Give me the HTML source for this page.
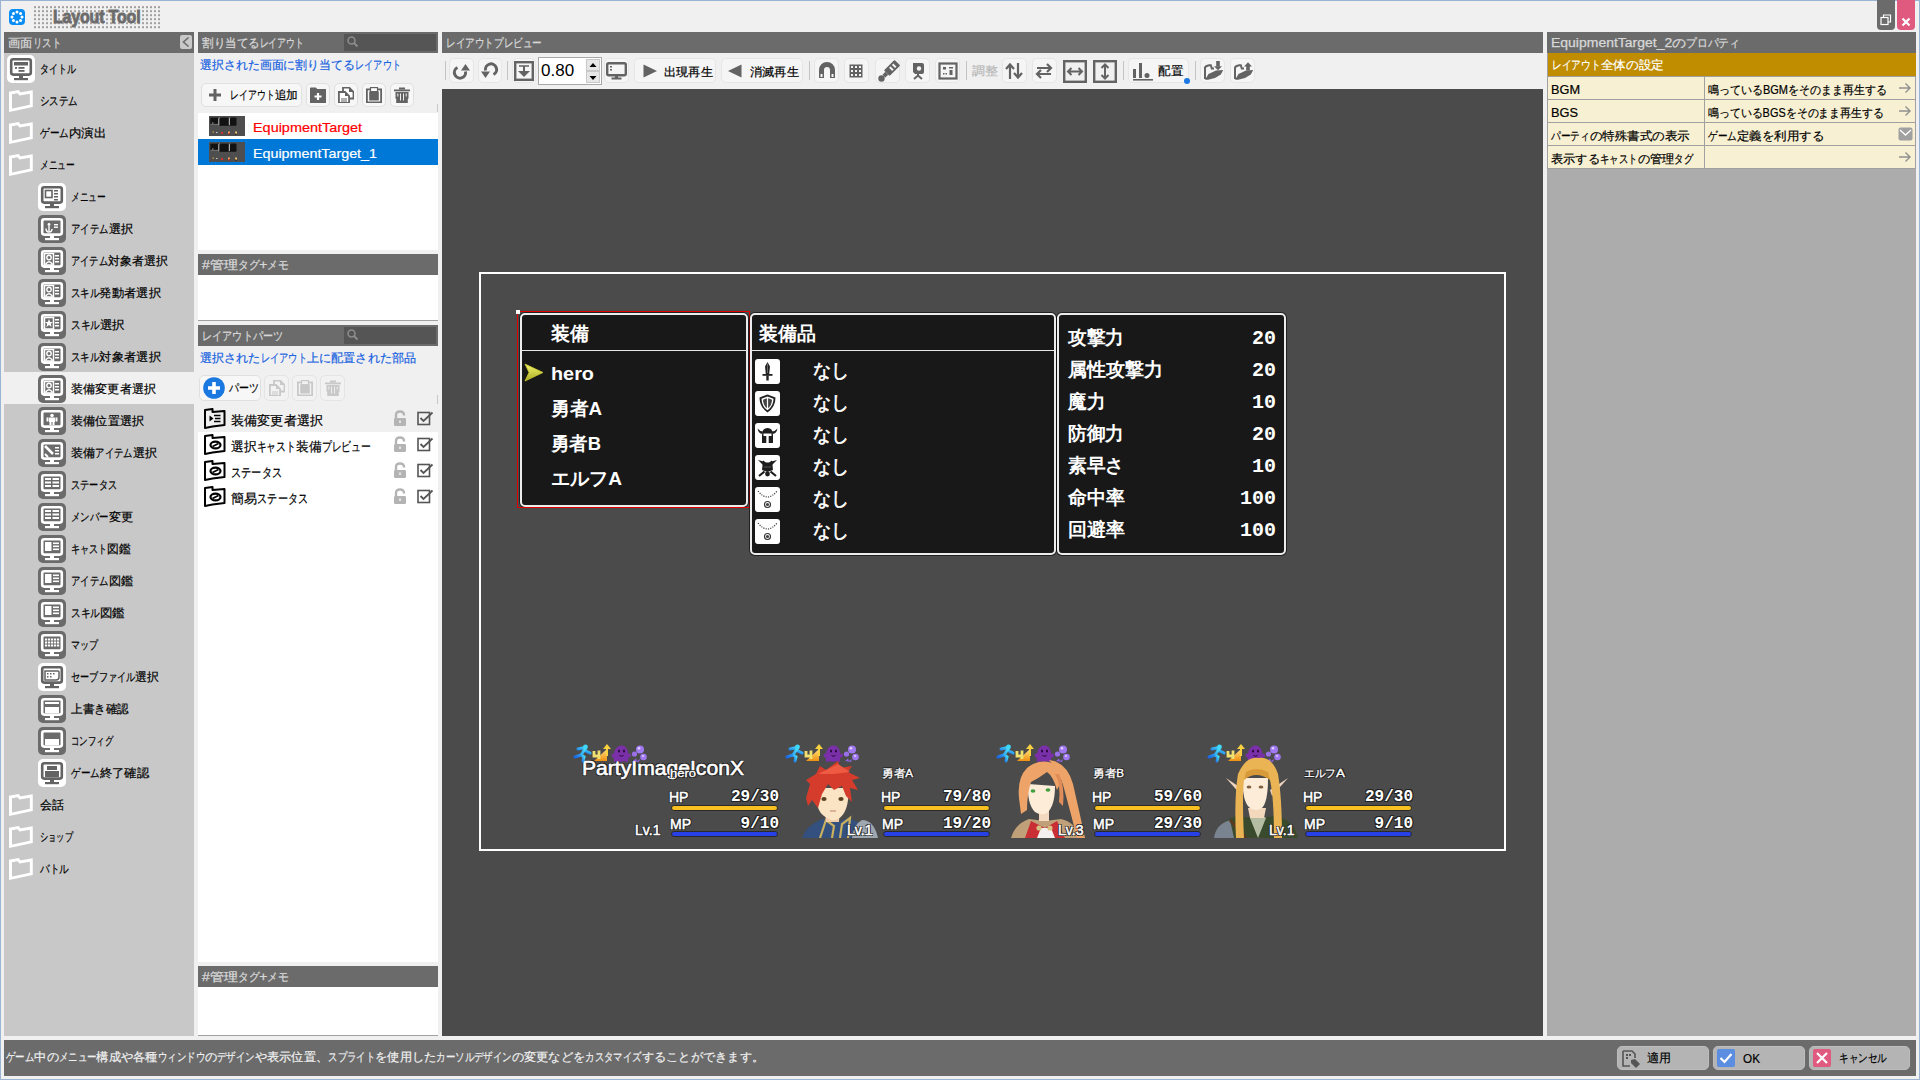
<!DOCTYPE html>
<html><head><meta charset="utf-8">
<style>
*{box-sizing:border-box;margin:0;padding:0}
html,body{width:1920px;height:1080px;overflow:hidden}
body{background:#f0f0f0;font-family:"Liberation Sans",sans-serif;font-size:12px;color:#000;position:relative}
.a{position:absolute;display:block}
.t{position:absolute;white-space:nowrap}
</style></head><body>
<div class="a" style="left:0px;top:0px;width:1920px;height:1080px;background:transparent;border:1px solid #98b4d4"></div>
<svg class="a" style="left:9px;top:9px;" width="16" height="16" viewBox="0 0 16 16"><rect x="0" y="0" width="16" height="16" rx="4" fill="#0a8cf5"/><circle cx="13.00" cy="8.00" r="1.5" fill="#fff"/><circle cx="11.54" cy="11.54" r="1.5" fill="#fff"/><circle cx="8.00" cy="13.00" r="1.5" fill="#fff"/><circle cx="4.46" cy="11.54" r="1.5" fill="#fff"/><circle cx="3.00" cy="8.00" r="1.5" fill="#fff"/><circle cx="4.46" cy="4.46" r="1.5" fill="#fff"/><circle cx="8.00" cy="3.00" r="1.5" fill="#fff"/><circle cx="11.54" cy="4.46" r="1.5" fill="#fff"/></svg>
<svg class="a" style="left:34px;top:6px;" width="128" height="24" viewBox="0 0 128 24"><defs><pattern id="dp" width="4" height="4" patternUnits="userSpaceOnUse"><rect x="0" y="0.2" width="2" height="2" fill="#a0a0a0"/></pattern></defs><rect width="128" height="24" fill="url(#dp)"/></svg>
<div class="t" style="left:53px;top:7.0px;font-size:19px;line-height:20px;color:#6b6b6b;font-weight:bold;transform:scaleX(0.84);transform-origin:left center;letter-spacing:-0.2px;-webkit-text-stroke:0.9px #6b6b6b;text-shadow:0 0 1px #f0f0f0,0 0 2px #f0f0f0">Layout Tool</div>
<div class="a" style="left:1877px;top:0px;width:18px;height:30px;background:#6b6b6b;border-radius:0 0 4px 4px"></div>
<svg class="a" style="left:1879px;top:13px;" width="14" height="14" viewBox="0 0 14 14"><rect x="2" y="4.5" width="7" height="7" fill="none" stroke="#fff" stroke-width="1.2"/><path d="M4.5 4.5V2H11.5V9H9" fill="none" stroke="#fff" stroke-width="1.2"/></svg>
<div class="a" style="left:1897px;top:0px;width:18px;height:30px;background:#e05a80;border-radius:0 0 4px 4px"></div>
<svg class="a" style="left:1899px;top:17px;" width="14" height="10" viewBox="0 0 14 10"><path d="M3.5 1.5L10.5 8.5M10.5 1.5L3.5 8.5" stroke="#fff" stroke-width="2.2"/></svg>
<div class="a" style="left:4px;top:32px;width:190px;height:21px;background:#6b6b6b;"></div>
<div class="t" style="left:8px;top:34.5px;font-size:12px;line-height:16px;color:#d8d8d8;font-weight:normal;transform:scaleX(1.0245);transform-origin:0 50%;-webkit-text-stroke:0.25px #d8d8d8">画面<span style="display:inline-block;transform:scaleX(0.77);transform-origin:0 0;margin-right:-8.28px">リスト</span></div>
<div class="a" style="left:180px;top:35px;width:12px;height:14px;background:#c8c8c8;border-radius:2px"></div>
<svg class="a" style="left:180px;top:35px;" width="12" height="14" viewBox="0 0 12 14"><path d="M8.5 2.5L3.5 7L8.5 11.5" fill="none" stroke="#6b6b6b" stroke-width="1.6"/></svg>
<div class="a" style="left:198px;top:32px;width:240px;height:21px;background:#6b6b6b;"></div>
<div class="t" style="left:202px;top:34.5px;font-size:12px;line-height:16px;color:#d8d8d8;font-weight:normal;transform:scaleX(0.9604);transform-origin:0 50%;-webkit-text-stroke:0.25px #d8d8d8">割り当てる<span style="display:inline-block;transform:scaleX(0.77);transform-origin:0 0;margin-right:-13.80px">レイアウト</span></div>
<div class="a" style="left:344px;top:34px;width:92px;height:17px;background:#555;"></div>
<svg class="a" style="left:346px;top:35px;" width="14" height="14" viewBox="0 0 14 14"><circle cx="5.5" cy="5.5" r="3.5" fill="none" stroke="#8c8c8c" stroke-width="1.6"/><path d="M8 8L11.5 11.5" stroke="#8c8c8c" stroke-width="2"/></svg>
<div class="a" style="left:442px;top:32px;width:1101px;height:21px;background:#6b6b6b;"></div>
<div class="t" style="left:446px;top:34.5px;font-size:12px;line-height:16px;color:#d8d8d8;font-weight:normal;transform:scaleX(1.0389);transform-origin:0 50%;-webkit-text-stroke:0.25px #d8d8d8"><span style="display:inline-block;transform:scaleX(0.77);transform-origin:0 0;margin-right:-27.60px">レイアウトプレビュー</span></div>
<div class="a" style="left:1547px;top:32px;width:369px;height:21px;background:#6b6b6b;"></div>
<div class="t" style="left:1551px;top:34.5px;font-size:12px;line-height:16px;color:#d8d8d8;font-weight:normal;transform:scaleX(1.1646);transform-origin:0 50%;-webkit-text-stroke:0.25px #d8d8d8">EquipmentTarget_2の<span style="display:inline-block;transform:scaleX(0.77);transform-origin:0 0;margin-right:-13.80px">プロパティ</span></div>
<div class="a" style="left:4px;top:53px;width:190px;height:983px;background:#c8c8c8;"></div>
<div class="a" style="left:4px;top:372px;width:190px;height:32px;background:#f0f0f0;"></div>
<svg class="a" style="left:7px;top:55px;" width="28" height="28" viewBox="0 0 28 28"><rect x="0" y="0" width="28" height="28" rx="5" fill="#fff"/><rect x="4.2" y="4.2" width="19.6" height="15.4" rx="2" fill="#fff" stroke="#636363" stroke-width="2.6"/><rect x="12" y="20" width="4" height="3" fill="#636363"/><rect x="7" y="23" width="14" height="2.2" fill="#636363"/><rect x="7" y="7" width="14" height="3.5" fill="#636363"/><rect x="8" y="12" width="2" height="1.8" fill="#636363"/><rect x="11.5" y="12" width="6" height="1.8" fill="#636363"/><rect x="11.5" y="15" width="6" height="1.8" fill="#636363"/></svg>
<div class="t" style="left:40px;top:60.5px;font-size:12px;line-height:16px;color:#000;font-weight:normal;transform:scaleX(0.9738);transform-origin:0 50%;-webkit-text-stroke:0.2px #000;"><span style="display:inline-block;transform:scaleX(0.77);transform-origin:0 0;margin-right:-11.04px">タイトル</span></div>
<svg class="a" style="left:8px;top:89px;" width="26" height="24" viewBox="0 0 26 24"><path d="M2.5 4L10.2 2.6L12 5L23.3 3L23.3 16.8L2.5 21.3Z" fill="none" stroke="#fff" stroke-width="2.9"/></svg>
<div class="t" style="left:40px;top:92.5px;font-size:12px;line-height:16px;color:#000;font-weight:normal;transform:scaleX(1.0279);transform-origin:0 50%;-webkit-text-stroke:0.2px #000;"><span style="display:inline-block;transform:scaleX(0.77);transform-origin:0 0;margin-right:-11.04px">システム</span></div>
<svg class="a" style="left:8px;top:121px;" width="26" height="24" viewBox="0 0 26 24"><path d="M2.5 4L10.2 2.6L12 5L23.3 3L23.3 16.8L2.5 21.3Z" fill="none" stroke="#fff" stroke-width="2.9"/></svg>
<div class="t" style="left:40px;top:124.5px;font-size:12px;line-height:16px;color:#000;font-weight:normal;transform:scaleX(1.0355);transform-origin:0 50%;-webkit-text-stroke:0.2px #000;"><span style="display:inline-block;transform:scaleX(0.77);transform-origin:0 0;margin-right:-8.28px">ゲーム</span>内演出</div>
<svg class="a" style="left:8px;top:153px;" width="26" height="24" viewBox="0 0 26 24"><path d="M2.5 4L10.2 2.6L12 5L23.3 3L23.3 16.8L2.5 21.3Z" fill="none" stroke="#fff" stroke-width="2.9"/></svg>
<div class="t" style="left:40px;top:156.5px;font-size:12px;line-height:16px;color:#000;font-weight:normal;transform:scaleX(0.9467);transform-origin:0 50%;-webkit-text-stroke:0.2px #000;"><span style="display:inline-block;transform:scaleX(0.77);transform-origin:0 0;margin-right:-11.04px">メニュー</span></div>
<svg class="a" style="left:38px;top:183px;" width="28" height="28" viewBox="0 0 28 28"><rect x="0" y="0" width="28" height="28" rx="5" fill="#fff"/><rect x="4.2" y="4.2" width="19.6" height="15.4" rx="2" fill="#fff" stroke="#636363" stroke-width="2.6"/><rect x="12" y="20" width="4" height="3" fill="#636363"/><rect x="7" y="23" width="14" height="2.2" fill="#636363"/><rect x="7.5" y="7.5" width="6.5" height="7" fill="none" stroke="#636363" stroke-width="1.6"/><rect x="16" y="7" width="4" height="1.5" fill="#636363"/><rect x="16" y="10" width="4" height="1.5" fill="#636363"/><rect x="16" y="13" width="4" height="1.5" fill="#636363"/><rect x="16" y="16" width="4" height="1.5" fill="#636363"/></svg>
<div class="t" style="left:71px;top:188.5px;font-size:12px;line-height:16px;color:#000;font-weight:normal;transform:scaleX(0.9467);transform-origin:0 50%;-webkit-text-stroke:0.2px #000;"><span style="display:inline-block;transform:scaleX(0.77);transform-origin:0 0;margin-right:-11.04px">メニュー</span></div>
<svg class="a" style="left:38px;top:215px;" width="28" height="28" viewBox="0 0 28 28"><rect x="0" y="0" width="28" height="28" rx="5" fill="#6b6b6b"/><rect x="4.2" y="4.2" width="19.6" height="15.4" rx="2" fill="#6b6b6b" stroke="#fff" stroke-width="2.6"/><rect x="12" y="20" width="4" height="3" fill="#fff"/><rect x="7" y="23" width="14" height="2.2" fill="#fff"/><rect x="7" y="7" width="14" height="11" fill="#6b6b6b"/><circle cx="11" cy="9.5" r="1.4" fill="#fff"/><path d="M11 11V16M8 13.5Q8 17 11 17Q14 17 14 14" fill="none" stroke="#fff" stroke-width="1.4"/><rect x="16" y="9" width="4" height="1.4" fill="#fff"/><rect x="16" y="11.5" width="4" height="1.4" fill="#fff"/></svg>
<div class="t" style="left:71px;top:220.5px;font-size:12px;line-height:16px;color:#000;font-weight:normal;transform:scaleX(1.0169);transform-origin:0 50%;-webkit-text-stroke:0.2px #000;"><span style="display:inline-block;transform:scaleX(0.77);transform-origin:0 0;margin-right:-11.04px">アイテム</span>選択</div>
<svg class="a" style="left:38px;top:247px;" width="28" height="28" viewBox="0 0 28 28"><rect x="0" y="0" width="28" height="28" rx="5" fill="#6b6b6b"/><rect x="4.2" y="4.2" width="19.6" height="15.4" rx="2" fill="#6b6b6b" stroke="#fff" stroke-width="2.6"/><rect x="12" y="20" width="4" height="3" fill="#fff"/><rect x="7" y="23" width="14" height="2.2" fill="#fff"/><rect x="6.5" y="6.5" width="9" height="11.5" fill="none" stroke="#fff" stroke-width="1.5"/><circle cx="11" cy="10.5" r="2.2" fill="none" stroke="#fff" stroke-width="1.4"/><path d="M7.5 17.5Q11 12 14.5 17.5" fill="none" stroke="#fff" stroke-width="1.4"/><rect x="17" y="8" width="4" height="1.5" fill="#fff"/><rect x="17" y="11" width="4" height="1.5" fill="#fff"/><rect x="17" y="14" width="4" height="1.5" fill="#fff"/></svg>
<div class="t" style="left:71px;top:252.5px;font-size:12px;line-height:16px;color:#000;font-weight:normal;transform:scaleX(1.0003);transform-origin:0 50%;-webkit-text-stroke:0.2px #000;"><span style="display:inline-block;transform:scaleX(0.77);transform-origin:0 0;margin-right:-11.04px">アイテム</span>対象者選択</div>
<svg class="a" style="left:38px;top:279px;" width="28" height="28" viewBox="0 0 28 28"><rect x="0" y="0" width="28" height="28" rx="5" fill="#6b6b6b"/><rect x="4.2" y="4.2" width="19.6" height="15.4" rx="2" fill="#6b6b6b" stroke="#fff" stroke-width="2.6"/><rect x="12" y="20" width="4" height="3" fill="#fff"/><rect x="7" y="23" width="14" height="2.2" fill="#fff"/><rect x="6.5" y="6.5" width="9" height="11.5" fill="none" stroke="#fff" stroke-width="1.5"/><circle cx="11" cy="10.5" r="2.2" fill="none" stroke="#fff" stroke-width="1.4"/><path d="M7.5 17.5Q11 12 14.5 17.5" fill="none" stroke="#fff" stroke-width="1.4"/><rect x="17" y="8" width="4" height="1.5" fill="#fff"/><rect x="17" y="11" width="4" height="1.5" fill="#fff"/><rect x="17" y="14" width="4" height="1.5" fill="#fff"/></svg>
<div class="t" style="left:71px;top:284.5px;font-size:12px;line-height:16px;color:#000;font-weight:normal;transform:scaleX(1.0258);transform-origin:0 50%;-webkit-text-stroke:0.2px #000;"><span style="display:inline-block;transform:scaleX(0.77);transform-origin:0 0;margin-right:-8.28px">スキル</span>発動者選択</div>
<svg class="a" style="left:38px;top:311px;" width="28" height="28" viewBox="0 0 28 28"><rect x="0" y="0" width="28" height="28" rx="5" fill="#6b6b6b"/><rect x="4.2" y="4.2" width="19.6" height="15.4" rx="2" fill="#6b6b6b" stroke="#fff" stroke-width="2.6"/><rect x="12" y="20" width="4" height="3" fill="#fff"/><rect x="7" y="23" width="14" height="2.2" fill="#fff"/><rect x="6.5" y="6.5" width="9" height="11.5" fill="none" stroke="#fff" stroke-width="1.5"/><path d="M11 8L12.2 11H15L12.8 12.8L13.6 16L11 14L8.4 16L9.2 12.8L7 11H9.8Z" fill="#fff"/><rect x="17" y="8" width="4" height="1.5" fill="#fff"/><rect x="17" y="11" width="4" height="1.5" fill="#fff"/><rect x="17" y="14" width="4" height="1.5" fill="#fff"/></svg>
<div class="t" style="left:71px;top:316.5px;font-size:12px;line-height:16px;color:#000;font-weight:normal;transform:scaleX(1.0438);transform-origin:0 50%;-webkit-text-stroke:0.2px #000;"><span style="display:inline-block;transform:scaleX(0.77);transform-origin:0 0;margin-right:-8.28px">スキル</span>選択</div>
<svg class="a" style="left:38px;top:343px;" width="28" height="28" viewBox="0 0 28 28"><rect x="0" y="0" width="28" height="28" rx="5" fill="#6b6b6b"/><rect x="4.2" y="4.2" width="19.6" height="15.4" rx="2" fill="#6b6b6b" stroke="#fff" stroke-width="2.6"/><rect x="12" y="20" width="4" height="3" fill="#fff"/><rect x="7" y="23" width="14" height="2.2" fill="#fff"/><rect x="6.5" y="6.5" width="9" height="11.5" fill="none" stroke="#fff" stroke-width="1.5"/><circle cx="11" cy="10.5" r="2.2" fill="none" stroke="#fff" stroke-width="1.4"/><path d="M7.5 17.5Q11 12 14.5 17.5" fill="none" stroke="#fff" stroke-width="1.4"/><rect x="17" y="8" width="4" height="1.5" fill="#fff"/><rect x="17" y="11" width="4" height="1.5" fill="#fff"/><rect x="17" y="14" width="4" height="1.5" fill="#fff"/></svg>
<div class="t" style="left:71px;top:348.5px;font-size:12px;line-height:16px;color:#000;font-weight:normal;transform:scaleX(1.0258);transform-origin:0 50%;-webkit-text-stroke:0.2px #000;"><span style="display:inline-block;transform:scaleX(0.77);transform-origin:0 0;margin-right:-8.28px">スキル</span>対象者選択</div>
<svg class="a" style="left:38px;top:375px;" width="28" height="28" viewBox="0 0 28 28"><rect x="0" y="0" width="28" height="28" rx="5" fill="#6b6b6b"/><rect x="4.2" y="4.2" width="19.6" height="15.4" rx="2" fill="#6b6b6b" stroke="#fff" stroke-width="2.6"/><rect x="12" y="20" width="4" height="3" fill="#fff"/><rect x="7" y="23" width="14" height="2.2" fill="#fff"/><rect x="6.5" y="6.5" width="9" height="11.5" fill="none" stroke="#fff" stroke-width="1.5"/><circle cx="11" cy="10.5" r="2.2" fill="none" stroke="#fff" stroke-width="1.4"/><path d="M7.5 17.5Q11 12 14.5 17.5" fill="none" stroke="#fff" stroke-width="1.4"/><rect x="17" y="8" width="4" height="1.5" fill="#fff"/><rect x="17" y="11" width="4" height="1.5" fill="#fff"/><rect x="17" y="14" width="4" height="1.5" fill="#fff"/></svg>
<div class="t" style="left:71px;top:380.5px;font-size:12px;line-height:16px;color:#000;font-weight:normal;transform:scaleX(1.0119);transform-origin:0 50%;-webkit-text-stroke:0.2px #000;">装備変更者選択</div>
<svg class="a" style="left:38px;top:407px;" width="28" height="28" viewBox="0 0 28 28"><rect x="0" y="0" width="28" height="28" rx="5" fill="#6b6b6b"/><rect x="4.2" y="4.2" width="19.6" height="15.4" rx="2" fill="#6b6b6b" stroke="#fff" stroke-width="2.6"/><rect x="12" y="20" width="4" height="3" fill="#fff"/><rect x="7" y="23" width="14" height="2.2" fill="#fff"/><circle cx="14" cy="8.5" r="1.8" fill="#fff"/><rect x="11" y="10.5" width="6" height="4.5" fill="#fff"/><rect x="8.5" y="10.5" width="2" height="4" fill="#fff"/><rect x="17.5" y="10.5" width="2" height="4" fill="#fff"/><rect x="11.5" y="15" width="2" height="3" fill="#fff"/><rect x="14.5" y="15" width="2" height="3" fill="#fff"/></svg>
<div class="t" style="left:71px;top:412.5px;font-size:12px;line-height:16px;color:#000;font-weight:normal;transform:scaleX(1.0139);transform-origin:0 50%;-webkit-text-stroke:0.2px #000;">装備位置選択</div>
<svg class="a" style="left:38px;top:439px;" width="28" height="28" viewBox="0 0 28 28"><rect x="0" y="0" width="28" height="28" rx="5" fill="#6b6b6b"/><rect x="4.2" y="4.2" width="19.6" height="15.4" rx="2" fill="#6b6b6b" stroke="#fff" stroke-width="2.6"/><rect x="12" y="20" width="4" height="3" fill="#fff"/><rect x="7" y="23" width="14" height="2.2" fill="#fff"/><path d="M7 7L15 15" stroke="#fff" stroke-width="2.5"/><path d="M7 15L10 18" stroke="#fff" stroke-width="2"/><rect x="17" y="8" width="4" height="1.5" fill="#fff"/><rect x="17" y="11" width="4" height="1.5" fill="#fff"/><rect x="17" y="14" width="4" height="1.5" fill="#fff"/></svg>
<div class="t" style="left:71px;top:444.5px;font-size:12px;line-height:16px;color:#000;font-weight:normal;transform:scaleX(1.0121);transform-origin:0 50%;-webkit-text-stroke:0.2px #000;">装備<span style="display:inline-block;transform:scaleX(0.77);transform-origin:0 0;margin-right:-11.04px">アイテム</span>選択</div>
<svg class="a" style="left:38px;top:471px;" width="28" height="28" viewBox="0 0 28 28"><rect x="0" y="0" width="28" height="28" rx="5" fill="#6b6b6b"/><rect x="4.2" y="4.2" width="19.6" height="15.4" rx="2" fill="#6b6b6b" stroke="#fff" stroke-width="2.6"/><rect x="12" y="20" width="4" height="3" fill="#fff"/><rect x="7" y="23" width="14" height="2.2" fill="#fff"/><rect x="7" y="7" width="6" height="2" fill="#fff"/><rect x="14.5" y="7" width="6.5" height="2" fill="#fff"/><rect x="7" y="10.5" width="6" height="2" fill="#fff"/><rect x="14.5" y="10.5" width="6.5" height="2" fill="#fff"/><rect x="7" y="14" width="6" height="2" fill="#fff"/><rect x="14.5" y="14" width="6.5" height="2" fill="#fff"/></svg>
<div class="t" style="left:71px;top:476.5px;font-size:12px;line-height:16px;color:#000;font-weight:normal;transform:scaleX(0.9956);transform-origin:0 50%;-webkit-text-stroke:0.2px #000;"><span style="display:inline-block;transform:scaleX(0.77);transform-origin:0 0;margin-right:-13.80px">ステータス</span></div>
<svg class="a" style="left:38px;top:503px;" width="28" height="28" viewBox="0 0 28 28"><rect x="0" y="0" width="28" height="28" rx="5" fill="#6b6b6b"/><rect x="4.2" y="4.2" width="19.6" height="15.4" rx="2" fill="#6b6b6b" stroke="#fff" stroke-width="2.6"/><rect x="12" y="20" width="4" height="3" fill="#fff"/><rect x="7" y="23" width="14" height="2.2" fill="#fff"/><rect x="7" y="7" width="6" height="2" fill="#fff"/><rect x="14.5" y="7" width="6.5" height="2" fill="#fff"/><rect x="7" y="10.5" width="6" height="2" fill="#fff"/><rect x="14.5" y="10.5" width="6.5" height="2" fill="#fff"/><rect x="7" y="14" width="6" height="2" fill="#fff"/><rect x="14.5" y="14" width="6.5" height="2" fill="#fff"/></svg>
<div class="t" style="left:71px;top:508.5px;font-size:12px;line-height:16px;color:#000;font-weight:normal;transform:scaleX(1.0169);transform-origin:0 50%;-webkit-text-stroke:0.2px #000;"><span style="display:inline-block;transform:scaleX(0.77);transform-origin:0 0;margin-right:-11.04px">メンバー</span>変更</div>
<svg class="a" style="left:38px;top:535px;" width="28" height="28" viewBox="0 0 28 28"><rect x="0" y="0" width="28" height="28" rx="5" fill="#6b6b6b"/><rect x="4.2" y="4.2" width="19.6" height="15.4" rx="2" fill="#6b6b6b" stroke="#fff" stroke-width="2.6"/><rect x="12" y="20" width="4" height="3" fill="#fff"/><rect x="7" y="23" width="14" height="2.2" fill="#fff"/><rect x="7" y="7" width="6.5" height="9" fill="#fff"/><rect x="15" y="7.5" width="6" height="1.6" fill="#fff"/><rect x="15" y="10.5" width="6" height="1.6" fill="#fff"/><rect x="15" y="13.5" width="6" height="1.6" fill="#fff"/></svg>
<div class="t" style="left:71px;top:540.5px;font-size:12px;line-height:16px;color:#000;font-weight:normal;transform:scaleX(0.9841);transform-origin:0 50%;-webkit-text-stroke:0.2px #000;"><span style="display:inline-block;transform:scaleX(0.77);transform-origin:0 0;margin-right:-11.04px">キャスト</span>図鑑</div>
<svg class="a" style="left:38px;top:567px;" width="28" height="28" viewBox="0 0 28 28"><rect x="0" y="0" width="28" height="28" rx="5" fill="#6b6b6b"/><rect x="4.2" y="4.2" width="19.6" height="15.4" rx="2" fill="#6b6b6b" stroke="#fff" stroke-width="2.6"/><rect x="12" y="20" width="4" height="3" fill="#fff"/><rect x="7" y="23" width="14" height="2.2" fill="#fff"/><rect x="7" y="7" width="6.5" height="9" fill="#fff"/><rect x="15" y="7.5" width="6" height="1.6" fill="#fff"/><rect x="15" y="10.5" width="6" height="1.6" fill="#fff"/><rect x="15" y="13.5" width="6" height="1.6" fill="#fff"/></svg>
<div class="t" style="left:71px;top:572.5px;font-size:12px;line-height:16px;color:#000;font-weight:normal;transform:scaleX(1.0169);transform-origin:0 50%;-webkit-text-stroke:0.2px #000;"><span style="display:inline-block;transform:scaleX(0.77);transform-origin:0 0;margin-right:-11.04px">アイテム</span>図鑑</div>
<svg class="a" style="left:38px;top:599px;" width="28" height="28" viewBox="0 0 28 28"><rect x="0" y="0" width="28" height="28" rx="5" fill="#6b6b6b"/><rect x="4.2" y="4.2" width="19.6" height="15.4" rx="2" fill="#6b6b6b" stroke="#fff" stroke-width="2.6"/><rect x="12" y="20" width="4" height="3" fill="#fff"/><rect x="7" y="23" width="14" height="2.2" fill="#fff"/><rect x="7" y="7" width="6.5" height="9" fill="#fff"/><rect x="15" y="7.5" width="6" height="1.6" fill="#fff"/><rect x="15" y="10.5" width="6" height="1.6" fill="#fff"/><rect x="15" y="13.5" width="6" height="1.6" fill="#fff"/></svg>
<div class="t" style="left:71px;top:604.5px;font-size:12px;line-height:16px;color:#000;font-weight:normal;transform:scaleX(1.0438);transform-origin:0 50%;-webkit-text-stroke:0.2px #000;"><span style="display:inline-block;transform:scaleX(0.77);transform-origin:0 0;margin-right:-8.28px">スキル</span>図鑑</div>
<svg class="a" style="left:38px;top:631px;" width="28" height="28" viewBox="0 0 28 28"><rect x="0" y="0" width="28" height="28" rx="5" fill="#6b6b6b"/><rect x="4.2" y="4.2" width="19.6" height="15.4" rx="2" fill="#6b6b6b" stroke="#fff" stroke-width="2.6"/><rect x="12" y="20" width="4" height="3" fill="#fff"/><rect x="7" y="23" width="14" height="2.2" fill="#fff"/><rect x="7" y="7.5" width="2.2" height="2" fill="#fff"/><rect x="7" y="10.5" width="2.2" height="2" fill="#fff"/><rect x="7" y="13.5" width="2.2" height="2" fill="#fff"/><rect x="10" y="7.5" width="2.2" height="2" fill="#fff"/><rect x="10" y="10.5" width="2.2" height="2" fill="#fff"/><rect x="10" y="13.5" width="2.2" height="2" fill="#fff"/><rect x="13" y="7.5" width="2.2" height="2" fill="#fff"/><rect x="13" y="10.5" width="2.2" height="2" fill="#fff"/><rect x="13" y="13.5" width="2.2" height="2" fill="#fff"/><rect x="16" y="7.5" width="2.2" height="2" fill="#fff"/><rect x="16" y="10.5" width="2.2" height="2" fill="#fff"/><rect x="16" y="13.5" width="2.2" height="2" fill="#fff"/><rect x="19" y="7.5" width="2.2" height="2" fill="#fff"/><rect x="19" y="10.5" width="2.2" height="2" fill="#fff"/><rect x="19" y="13.5" width="2.2" height="2" fill="#fff"/></svg>
<div class="t" style="left:71px;top:636.5px;font-size:12px;line-height:16px;color:#000;font-weight:normal;transform:scaleX(0.9735);transform-origin:0 50%;-webkit-text-stroke:0.2px #000;"><span style="display:inline-block;transform:scaleX(0.77);transform-origin:0 0;margin-right:-8.28px">マップ</span></div>
<svg class="a" style="left:38px;top:663px;" width="28" height="28" viewBox="0 0 28 28"><rect x="0" y="0" width="28" height="28" rx="5" fill="#fff"/><rect x="4.2" y="4.2" width="19.6" height="15.4" rx="2" fill="#fff" stroke="#636363" stroke-width="2.6"/><rect x="12" y="20" width="4" height="3" fill="#636363"/><rect x="7" y="23" width="14" height="2.2" fill="#636363"/><path d="M7 8H20Q21 8 21 9V14Q21 17 18 17H7Z" fill="none" stroke="#636363" stroke-width="1.5"/><rect x="9" y="10" width="1.5" height="1.5" fill="#636363"/><rect x="12" y="10" width="1.5" height="1.5" fill="#636363"/><rect x="15" y="10" width="1.5" height="1.5" fill="#636363"/><rect x="9" y="13" width="1.5" height="1.5" fill="#636363"/><rect x="12" y="13" width="1.5" height="1.5" fill="#636363"/></svg>
<div class="t" style="left:71px;top:668.5px;font-size:12px;line-height:16px;color:#000;font-weight:normal;transform:scaleX(0.9922);transform-origin:0 50%;-webkit-text-stroke:0.2px #000;"><span style="display:inline-block;transform:scaleX(0.77);transform-origin:0 0;margin-right:-19.32px">セーブファイル</span>選択</div>
<svg class="a" style="left:38px;top:695px;" width="28" height="28" viewBox="0 0 28 28"><rect x="0" y="0" width="28" height="28" rx="5" fill="#6b6b6b"/><rect x="4.2" y="4.2" width="19.6" height="15.4" rx="2" fill="#6b6b6b" stroke="#fff" stroke-width="2.6"/><rect x="12" y="20" width="4" height="3" fill="#fff"/><rect x="7" y="23" width="14" height="2.2" fill="#fff"/><rect x="7" y="7" width="14" height="2" fill="#fff"/><rect x="7" y="12" width="14" height="6" fill="#fff"/></svg>
<div class="t" style="left:71px;top:700.5px;font-size:12px;line-height:16px;color:#000;font-weight:normal;transform:scaleX(0.9667);transform-origin:0 50%;-webkit-text-stroke:0.2px #000;">上書き確認</div>
<svg class="a" style="left:38px;top:727px;" width="28" height="28" viewBox="0 0 28 28"><rect x="0" y="0" width="28" height="28" rx="5" fill="#6b6b6b"/><rect x="4.2" y="4.2" width="19.6" height="15.4" rx="2" fill="#6b6b6b" stroke="#fff" stroke-width="2.6"/><rect x="12" y="20" width="4" height="3" fill="#fff"/><rect x="7" y="23" width="14" height="2.2" fill="#fff"/><rect x="7" y="12" width="14" height="6" fill="#fff"/></svg>
<div class="t" style="left:71px;top:732.5px;font-size:12px;line-height:16px;color:#000;font-weight:normal;transform:scaleX(0.9090);transform-origin:0 50%;-webkit-text-stroke:0.2px #000;"><span style="display:inline-block;transform:scaleX(0.77);transform-origin:0 0;margin-right:-13.80px">コンフィグ</span></div>
<svg class="a" style="left:38px;top:759px;" width="28" height="28" viewBox="0 0 28 28"><rect x="0" y="0" width="28" height="28" rx="5" fill="#fff"/><rect x="4.2" y="4.2" width="19.6" height="15.4" rx="2" fill="#fff" stroke="#636363" stroke-width="2.6"/><rect x="12" y="20" width="4" height="3" fill="#636363"/><rect x="7" y="23" width="14" height="2.2" fill="#636363"/><rect x="9" y="7" width="10" height="4" fill="#636363"/><rect x="7" y="12" width="14" height="6" fill="#636363"/></svg>
<div class="t" style="left:71px;top:764.5px;font-size:12px;line-height:16px;color:#000;font-weight:normal;transform:scaleX(1.0299);transform-origin:0 50%;-webkit-text-stroke:0.2px #000;"><span style="display:inline-block;transform:scaleX(0.77);transform-origin:0 0;margin-right:-8.28px">ゲーム</span>終了確認</div>
<svg class="a" style="left:8px;top:793px;" width="26" height="24" viewBox="0 0 26 24"><path d="M2.5 4L10.2 2.6L12 5L23.3 3L23.3 16.8L2.5 21.3Z" fill="none" stroke="#fff" stroke-width="2.9"/></svg>
<div class="t" style="left:40px;top:796.5px;font-size:12px;line-height:16px;color:#000;font-weight:normal;transform:scaleX(1.0000);transform-origin:0 50%;-webkit-text-stroke:0.2px #000;">会話</div>
<svg class="a" style="left:8px;top:825px;" width="26" height="24" viewBox="0 0 26 24"><path d="M2.5 4L10.2 2.6L12 5L23.3 3L23.3 16.8L2.5 21.3Z" fill="none" stroke="#fff" stroke-width="2.9"/></svg>
<div class="t" style="left:40px;top:828.5px;font-size:12px;line-height:16px;color:#000;font-weight:normal;transform:scaleX(0.8926);transform-origin:0 50%;-webkit-text-stroke:0.2px #000;"><span style="display:inline-block;transform:scaleX(0.77);transform-origin:0 0;margin-right:-11.04px">ショップ</span></div>
<svg class="a" style="left:8px;top:857px;" width="26" height="24" viewBox="0 0 26 24"><path d="M2.5 4L10.2 2.6L12 5L23.3 3L23.3 16.8L2.5 21.3Z" fill="none" stroke="#fff" stroke-width="2.9"/></svg>
<div class="t" style="left:40px;top:860.5px;font-size:12px;line-height:16px;color:#000;font-weight:normal;transform:scaleX(1.0456);transform-origin:0 50%;-webkit-text-stroke:0.2px #000;"><span style="display:inline-block;transform:scaleX(0.77);transform-origin:0 0;margin-right:-8.28px">バトル</span></div>
<div class="t" style="left:200px;top:56.5px;font-size:12px;line-height:16px;color:#1862e0;font-weight:normal;transform:scaleX(0.9940);transform-origin:0 50%;-webkit-text-stroke:0.2px #1862e0;">選択された画面に割り当てる<span style="display:inline-block;transform:scaleX(0.77);transform-origin:0 0;margin-right:-13.80px">レイアウト</span></div>
<div class="a" style="left:201px;top:83px;width:101px;height:24px;background:#f7f7f7;border:1px solid #e0e0e0;border-radius:5px"></div>
<svg class="a" style="left:207px;top:87px;" width="16" height="16" viewBox="0 0 16 16"><path d="M8 2V14M2 8H14" stroke="#636363" stroke-width="3"/></svg>
<div class="t" style="left:230px;top:87.0px;font-size:12px;line-height:16px;color:#000;font-weight:normal;transform:scaleX(0.9686);transform-origin:0 50%;-webkit-text-stroke:0.2px #000;"><span style="display:inline-block;transform:scaleX(0.77);transform-origin:0 0;margin-right:-13.80px">レイアウト</span>追加</div>
<div class="a" style="left:306px;top:83px;width:24px;height:24px;background:#f7f7f7;border:1px solid #e0e0e0;border-radius:5px"></div>
<svg class="a" style="left:310px;top:87px;" width="16" height="16" viewBox="0 0 16 16"><path d="M0 1.2Q0 0.5 0.8 0.5H5.8L7.3 2H16V16H0Z" fill="#636363"/><path d="M8 6V13M4.5 9.5H11.5" stroke="#fff" stroke-width="2.2"/></svg>
<div class="a" style="left:334px;top:83px;width:24px;height:24px;background:#f7f7f7;border:1px solid #e0e0e0;border-radius:5px"></div>
<svg class="a" style="left:338px;top:87px;" width="16" height="16" viewBox="0 0 16 16"><path d="M5 0.5H11L15.5 5V11.5H5Z" fill="#fff" stroke="#636363" stroke-width="1.8"/><path d="M0.9 5H7L11.1 9.1V16H0.9Z" fill="#fff" stroke="#636363" stroke-width="1.8"/><path d="M3 12H9M3 14H9" stroke="#636363" stroke-width="1"/><path d="M11 0.5V5H15.5Z" fill="#636363"/><path d="M7 5V9.1H11.1Z" fill="#636363"/></svg>
<div class="a" style="left:362px;top:83px;width:24px;height:24px;background:#f7f7f7;border:1px solid #e0e0e0;border-radius:5px"></div>
<svg class="a" style="left:366px;top:87px;" width="16" height="16" viewBox="0 0 16 16"><rect x="0.9" y="2.4" width="14.2" height="13" fill="none" stroke="#636363" stroke-width="1.8"/><rect x="3.2" y="4.5" width="9.6" height="9" fill="#636363"/><rect x="4.5" y="0.6" width="7" height="4" fill="#fff" stroke="#636363" stroke-width="1.2"/></svg>
<div class="a" style="left:390px;top:83px;width:24px;height:24px;background:#f7f7f7;border:1px solid #e0e0e0;border-radius:5px"></div>
<svg class="a" style="left:394px;top:87px;" width="16" height="16" viewBox="0 0 16 16"><rect x="0" y="2.5" width="16" height="1.8" fill="#636363"/><rect x="5" y="0.5" width="6" height="2" fill="#636363"/><path d="M1.5 5H14.5V11.5L13.8 12V16H2.2V12L1.5 11.5Z" fill="#636363"/><path d="M3.8 6.5V9.5M6.5 6.5V13.5M9.5 6.5V13.5M12.2 6.5V9.5" stroke="#fff" stroke-width="0.9"/></svg>
<div class="a" style="left:437px;top:104px;width:1px;height:8px;background:#c8c8c8;"></div>
<div class="a" style="left:198px;top:113px;width:240px;height:137px;background:#fff;"></div>
<div class="a" style="left:198px;top:139px;width:240px;height:26px;background:#0078d7;"></div>
<svg class="a" style="left:209px;top:116px;" width="36" height="20" viewBox="0 0 36 20"><rect width="36" height="20" fill="#4e4e4e"/><rect x="1.3" y="1.6" width="7.8" height="6.6" fill="#121212"/><rect x="9.3" y="1.6" width="10.4" height="8.2" fill="#121212"/><rect x="20" y="1.6" width="7.5" height="8.2" rx="1" fill="#121212"/><path d="M9.8 9.5V2.5Q9.8 1.8 10.6 1.8M20.4 9V2.5Q20.4 1.8 21.2 1.8" stroke="#eee" stroke-width="0.8" fill="none"/><path d="M1.5 8.3H9" stroke="#aaa" stroke-width="0.5"/><rect x="3" y="6.5" width="1.5" height="1" fill="#aaa"/><rect x="3.5" y="15.5" width="1.5" height="1.2" fill="#c8a040"/><rect x="7" y="16" width="1.5" height="1" fill="#ccc"/><rect x="12" y="16" width="2" height="2" fill="#d03030"/><rect x="19" y="15.5" width="2" height="2.5" fill="#e0a060"/><rect x="19.5" y="17" width="1.5" height="1.5" fill="#c02020"/><rect x="26" y="15.5" width="2" height="2.5" fill="#e8c070"/><rect x="26" y="17.5" width="1.5" height="1" fill="#111"/></svg>
<div class="t" style="left:253px;top:118.5px;font-size:13px;line-height:17px;color:#f00;font-weight:normal;transform:scaleX(1.1091);transform-origin:0 50%;-webkit-text-stroke:0.2px #f00;">EquipmentTarget</div>
<svg class="a" style="left:209px;top:142px;" width="36" height="20" viewBox="0 0 36 20"><rect width="36" height="20" fill="#4e4e4e"/><rect x="1.3" y="1.6" width="7.8" height="6.6" fill="#121212"/><rect x="9.3" y="1.6" width="10.4" height="8.2" fill="#121212"/><rect x="20" y="1.6" width="7.5" height="8.2" rx="1" fill="#121212"/><path d="M9.8 9.5V2.5Q9.8 1.8 10.6 1.8M20.4 9V2.5Q20.4 1.8 21.2 1.8" stroke="#eee" stroke-width="0.8" fill="none"/><path d="M1.5 8.3H9" stroke="#aaa" stroke-width="0.5"/><rect x="3" y="6.5" width="1.5" height="1" fill="#aaa"/><rect x="3.5" y="15.5" width="1.5" height="1.2" fill="#c8a040"/><rect x="7" y="16" width="1.5" height="1" fill="#ccc"/><rect x="12" y="16" width="2" height="2" fill="#d03030"/><rect x="19" y="15.5" width="2" height="2.5" fill="#e0a060"/><rect x="19.5" y="17" width="1.5" height="1.5" fill="#c02020"/><rect x="26" y="15.5" width="2" height="2.5" fill="#e8c070"/><rect x="26" y="17.5" width="1.5" height="1" fill="#111"/></svg>
<div class="t" style="left:253px;top:144.5px;font-size:13px;line-height:17px;color:#fff;font-weight:normal;transform:scaleX(1.0998);transform-origin:0 50%;-webkit-text-stroke:0.2px #fff;">EquipmentTarget_1</div>
<div class="a" style="left:198px;top:254px;width:240px;height:21px;background:#6b6b6b;"></div>
<div class="t" style="left:202px;top:256.5px;font-size:12px;line-height:16px;color:#d8d8d8;font-weight:normal;transform:scaleX(1.1651);transform-origin:0 50%;-webkit-text-stroke:0.25px #d8d8d8">#管理<span style="display:inline-block;transform:scaleX(0.77);transform-origin:0 0;margin-right:-5.52px">タグ</span>+<span style="display:inline-block;transform:scaleX(0.77);transform-origin:0 0;margin-right:-5.52px">メモ</span></div>
<div class="a" style="left:198px;top:275px;width:240px;height:46px;background:#fff;border-bottom:1px solid #a0a0a0"></div>
<div class="a" style="left:198px;top:325px;width:240px;height:21px;background:#6b6b6b;"></div>
<div class="t" style="left:202px;top:327.5px;font-size:12px;line-height:16px;color:#d8d8d8;font-weight:normal;transform:scaleX(1.0958);transform-origin:0 50%;-webkit-text-stroke:0.25px #d8d8d8"><span style="display:inline-block;transform:scaleX(0.77);transform-origin:0 0;margin-right:-22.08px">レイアウトパーツ</span></div>
<div class="a" style="left:344px;top:327px;width:92px;height:17px;background:#555;"></div>
<svg class="a" style="left:346px;top:328px;" width="14" height="14" viewBox="0 0 14 14"><circle cx="5.5" cy="5.5" r="3.5" fill="none" stroke="#8c8c8c" stroke-width="1.6"/><path d="M8 8L11.5 11.5" stroke="#8c8c8c" stroke-width="2"/></svg>
<div class="t" style="left:200px;top:349.5px;font-size:12px;line-height:16px;color:#1862e0;font-weight:normal;transform:scaleX(1.0084);transform-origin:0 50%;-webkit-text-stroke:0.2px #1862e0;">選択された<span style="display:inline-block;transform:scaleX(0.77);transform-origin:0 0;margin-right:-13.80px">レイアウト</span>上に配置された部品</div>
<div class="a" style="left:199px;top:375px;width:62px;height:26px;background:#f7f7f7;border:1px solid #e0e0e0;border-radius:5px"></div>
<svg class="a" style="left:203px;top:377px;" width="22" height="22" viewBox="0 0 22 22"><circle cx="11" cy="11" r="10.8" fill="#1a78e0"/><path d="M11 5V17M5 11H17" stroke="#fff" stroke-width="3.6"/></svg>
<div class="t" style="left:229px;top:380.0px;font-size:12px;line-height:16px;color:#000;font-weight:normal;transform:scaleX(1.0817);transform-origin:0 50%;-webkit-text-stroke:0.2px #000;"><span style="display:inline-block;transform:scaleX(0.77);transform-origin:0 0;margin-right:-8.28px">パーツ</span></div>
<div class="a" style="left:264px;top:375px;width:25px;height:26px;background:#f2f2f2;border:1px solid #e4e4e4;border-radius:5px"></div>
<div class="a" style="left:292px;top:375px;width:25px;height:26px;background:#f2f2f2;border:1px solid #e4e4e4;border-radius:5px"></div>
<div class="a" style="left:320px;top:375px;width:25px;height:26px;background:#f2f2f2;border:1px solid #e4e4e4;border-radius:5px"></div>
<svg class="a" style="left:269px;top:380px;" width="16" height="16" viewBox="0 0 16 16"><path d="M5 0.5H11L15.5 5V11.5H5Z" fill="#f2f2f2" stroke="#c8c8c8" stroke-width="1.8"/><path d="M0.9 5H7L11.1 9.1V16H0.9Z" fill="#f2f2f2" stroke="#c8c8c8" stroke-width="1.8"/><path d="M3 12H9M3 14H9" stroke="#c8c8c8" stroke-width="1"/><path d="M11 0.5V5H15.5Z" fill="#c8c8c8"/><path d="M7 5V9.1H11.1Z" fill="#c8c8c8"/></svg>
<svg class="a" style="left:297px;top:380px;" width="16" height="16" viewBox="0 0 16 16"><rect x="0.9" y="2.4" width="14.2" height="13" fill="none" stroke="#c8c8c8" stroke-width="1.8"/><rect x="3.2" y="4.5" width="9.6" height="9" fill="#c8c8c8"/><rect x="4.5" y="0.6" width="7" height="4" fill="#f2f2f2" stroke="#c8c8c8" stroke-width="1.2"/></svg>
<svg class="a" style="left:325px;top:380px;" width="16" height="16" viewBox="0 0 16 16"><rect x="0" y="2.5" width="16" height="1.8" fill="#c8c8c8"/><rect x="5" y="0.5" width="6" height="2" fill="#c8c8c8"/><path d="M1.5 5H14.5V11.5L13.8 12V16H2.2V12L1.5 11.5Z" fill="#c8c8c8"/><path d="M3.8 6.5V9.5M6.5 6.5V13.5M9.5 6.5V13.5M12.2 6.5V9.5" stroke="#f2f2f2" stroke-width="0.9"/></svg>
<div class="a" style="left:437px;top:395px;width:1px;height:9px;background:#c8c8c8;"></div>
<div class="a" style="left:198px;top:432px;width:240px;height:530px;background:#fff;"></div>
<div class="a" style="left:198px;top:406px;width:240px;height:26px;background:#f0f0f0;"></div>
<svg class="a" style="left:204px;top:408px;" width="22" height="22" viewBox="0 0 22 22"><path d="M1 2L8.5 1V4L20.5 3V17L8.5 18.5L1 20Z" fill="none" stroke="#000" stroke-width="2" stroke-linejoin="round"/><path d="M5.5 7.5L9.5 10.5L5.5 13.5Z" fill="#000"/><path d="M10 7.5H16.5M11 10.5H16.5M10 13.5H16.5" stroke="#000" stroke-width="1.6"/></svg>
<div class="t" style="left:231px;top:411.5px;font-size:13px;line-height:17px;color:#000;font-weight:normal;transform:scaleX(1.0110);transform-origin:0 50%;-webkit-text-stroke:0.2px #000;">装備変更者選択</div>
<svg class="a" style="left:393px;top:410px;" width="14" height="17" viewBox="0 0 14 17"><path d="M3 8V5Q3 1.5 7 1.5Q11 1.5 11 5V5.5" fill="none" stroke="#b4b4b4" stroke-width="2.4"/><rect x="1" y="8" width="12" height="8" rx="1.2" fill="#b4b4b4"/><rect x="6.2" y="10.5" width="1.6" height="2.5" fill="#f0f0f0"/></svg>
<svg class="a" style="left:417px;top:411px;" width="17" height="15" viewBox="0 0 17 15"><rect x="1" y="1.5" width="11.5" height="12" fill="none" stroke="#555" stroke-width="1.6"/><path d="M3.5 7L6.5 10L15.5 1.5" fill="none" stroke="#555" stroke-width="1.8"/></svg>
<svg class="a" style="left:204px;top:434px;" width="22" height="22" viewBox="0 0 22 22"><path d="M1 2L8.5 1V4L20.5 3V17L8.5 18.5L1 20Z" fill="none" stroke="#000" stroke-width="2" stroke-linejoin="round"/><ellipse cx="11.5" cy="11" rx="5" ry="3.4" fill="none" stroke="#000" stroke-width="2.2"/><path d="M8.5 12.5L14.5 9.5" stroke="#000" stroke-width="1.8"/></svg>
<div class="t" style="left:231px;top:437.5px;font-size:13px;line-height:17px;color:#000;font-weight:normal;transform:scaleX(0.9852);transform-origin:0 50%;-webkit-text-stroke:0.2px #000;">選択<span style="display:inline-block;transform:scaleX(0.77);transform-origin:0 0;margin-right:-11.96px">キャスト</span>装備<span style="display:inline-block;transform:scaleX(0.77);transform-origin:0 0;margin-right:-14.95px">プレビュー</span></div>
<svg class="a" style="left:393px;top:436px;" width="14" height="17" viewBox="0 0 14 17"><path d="M3 8V5Q3 1.5 7 1.5Q11 1.5 11 5V5.5" fill="none" stroke="#b4b4b4" stroke-width="2.4"/><rect x="1" y="8" width="12" height="8" rx="1.2" fill="#b4b4b4"/><rect x="6.2" y="10.5" width="1.6" height="2.5" fill="#f0f0f0"/></svg>
<svg class="a" style="left:417px;top:437px;" width="17" height="15" viewBox="0 0 17 15"><rect x="1" y="1.5" width="11.5" height="12" fill="none" stroke="#555" stroke-width="1.6"/><path d="M3.5 7L6.5 10L15.5 1.5" fill="none" stroke="#555" stroke-width="1.8"/></svg>
<svg class="a" style="left:204px;top:460px;" width="22" height="22" viewBox="0 0 22 22"><path d="M1 2L8.5 1V4L20.5 3V17L8.5 18.5L1 20Z" fill="none" stroke="#000" stroke-width="2" stroke-linejoin="round"/><ellipse cx="11.5" cy="11" rx="5" ry="3.4" fill="none" stroke="#000" stroke-width="2.2"/><path d="M8.5 12.5L14.5 9.5" stroke="#000" stroke-width="1.8"/></svg>
<div class="t" style="left:231px;top:463.5px;font-size:13px;line-height:17px;color:#000;font-weight:normal;transform:scaleX(1.0187);transform-origin:0 50%;-webkit-text-stroke:0.2px #000;"><span style="display:inline-block;transform:scaleX(0.77);transform-origin:0 0;margin-right:-14.95px">ステータス</span></div>
<svg class="a" style="left:393px;top:462px;" width="14" height="17" viewBox="0 0 14 17"><path d="M3 8V5Q3 1.5 7 1.5Q11 1.5 11 5V5.5" fill="none" stroke="#b4b4b4" stroke-width="2.4"/><rect x="1" y="8" width="12" height="8" rx="1.2" fill="#b4b4b4"/><rect x="6.2" y="10.5" width="1.6" height="2.5" fill="#f0f0f0"/></svg>
<svg class="a" style="left:417px;top:463px;" width="17" height="15" viewBox="0 0 17 15"><rect x="1" y="1.5" width="11.5" height="12" fill="none" stroke="#555" stroke-width="1.6"/><path d="M3.5 7L6.5 10L15.5 1.5" fill="none" stroke="#555" stroke-width="1.8"/></svg>
<svg class="a" style="left:204px;top:486px;" width="22" height="22" viewBox="0 0 22 22"><path d="M1 2L8.5 1V4L20.5 3V17L8.5 18.5L1 20Z" fill="none" stroke="#000" stroke-width="2" stroke-linejoin="round"/><ellipse cx="11.5" cy="11" rx="5" ry="3.4" fill="none" stroke="#000" stroke-width="2.2"/><path d="M8.5 12.5L14.5 9.5" stroke="#000" stroke-width="1.8"/></svg>
<div class="t" style="left:231px;top:489.5px;font-size:13px;line-height:17px;color:#000;font-weight:normal;transform:scaleX(1.0123);transform-origin:0 50%;-webkit-text-stroke:0.2px #000;">簡易<span style="display:inline-block;transform:scaleX(0.77);transform-origin:0 0;margin-right:-14.95px">ステータス</span></div>
<svg class="a" style="left:393px;top:488px;" width="14" height="17" viewBox="0 0 14 17"><path d="M3 8V5Q3 1.5 7 1.5Q11 1.5 11 5V5.5" fill="none" stroke="#b4b4b4" stroke-width="2.4"/><rect x="1" y="8" width="12" height="8" rx="1.2" fill="#b4b4b4"/><rect x="6.2" y="10.5" width="1.6" height="2.5" fill="#f0f0f0"/></svg>
<svg class="a" style="left:417px;top:489px;" width="17" height="15" viewBox="0 0 17 15"><rect x="1" y="1.5" width="11.5" height="12" fill="none" stroke="#555" stroke-width="1.6"/><path d="M3.5 7L6.5 10L15.5 1.5" fill="none" stroke="#555" stroke-width="1.8"/></svg>
<div class="a" style="left:198px;top:966px;width:240px;height:21px;background:#6b6b6b;"></div>
<div class="t" style="left:202px;top:968.5px;font-size:12px;line-height:16px;color:#d8d8d8;font-weight:normal;transform:scaleX(1.1651);transform-origin:0 50%;-webkit-text-stroke:0.25px #d8d8d8">#管理<span style="display:inline-block;transform:scaleX(0.77);transform-origin:0 0;margin-right:-5.52px">タグ</span>+<span style="display:inline-block;transform:scaleX(0.77);transform-origin:0 0;margin-right:-5.52px">メモ</span></div>
<div class="a" style="left:198px;top:987px;width:240px;height:49px;background:#fff;border-bottom:1px solid #a0a0a0"></div>
<div class="a" style="left:445px;top:61px;width:1px;height:19px;background:#c4c4c4;"></div>
<div class="a" style="left:449px;top:58px;width:25px;height:25px;background:#f5f5f5;border:1px solid #e6e6e6;border-radius:5px"></div>
<svg class="a" style="left:451px;top:61px;" width="20" height="20" viewBox="0 0 20 20"><path d="M6.5 6.5A5.6 5.6 0 1 0 14.5 10.5" fill="none" stroke="#636363" stroke-width="3"/><path d="M14.5 3L19 9.5H10Z" fill="#636363"/></svg>
<div class="a" style="left:478px;top:58px;width:24px;height:25px;background:#f5f5f5;border:1px solid #e6e6e6;border-radius:5px"></div>
<svg class="a" style="left:480px;top:61px;transform:rotate(180deg)" width="20" height="20" viewBox="0 0 20 20"><path d="M6.5 6.5A5.6 5.6 0 1 0 14.5 10.5" fill="none" stroke="#636363" stroke-width="3"/><path d="M14.5 3L19 9.5H10Z" fill="#636363"/></svg>
<div class="a" style="left:507px;top:61px;width:1px;height:19px;background:#c4c4c4;"></div>
<div class="a" style="left:512px;top:58px;width:24px;height:25px;background:#f5f5f5;border:1px solid #e6e6e6;border-radius:5px"></div>
<svg class="a" style="left:514px;top:61px;" width="20" height="20" viewBox="0 0 20 20"><rect x="1.2" y="1.2" width="17.6" height="17.6" fill="none" stroke="#636363" stroke-width="2.4"/><path d="M5 5H15" stroke="#636363" stroke-width="1.5"/><rect x="9" y="5" width="2" height="5" fill="#636363"/><path d="M4 10H16L10 16Z" fill="#636363"/></svg>
<div class="a" style="left:538px;top:57px;width:64px;height:28px;background:#fff;border:1px solid #a8a8a8"></div>
<div class="t" style="left:541px;top:61.0px;font-size:17px;line-height:20px;color:#000;font-weight:normal;">0.80</div>
<div class="a" style="left:586px;top:59px;width:14px;height:12px;background:#e6e6e6;border:1px solid #c8c8c8"></div>
<div class="a" style="left:586px;top:71px;width:14px;height:12px;background:#e6e6e6;border:1px solid #c8c8c8"></div>
<svg class="a" style="left:589px;top:62px;" width="8" height="6" viewBox="0 0 8 6"><path d="M4 1L7.5 5H0.5Z" fill="#000"/></svg>
<svg class="a" style="left:589px;top:75px;" width="8" height="6" viewBox="0 0 8 6"><path d="M0.5 1H7.5L4 5Z" fill="#000"/></svg>
<div class="a" style="left:604px;top:58px;width:25px;height:25px;background:#f5f5f5;border:1px solid #e6e6e6;border-radius:5px"></div>
<svg class="a" style="left:606px;top:61px;" width="21" height="20" viewBox="0 0 21 20"><rect x="1.2" y="2.2" width="18.6" height="12" rx="1.5" fill="none" stroke="#636363" stroke-width="2.4"/><rect x="4" y="5" width="2" height="1.5" fill="#636363"/><rect x="4" y="8" width="2" height="1.5" fill="#636363"/><rect x="9" y="14" width="3" height="3" fill="#636363"/><rect x="5.5" y="16.5" width="10" height="2" fill="#636363"/></svg>
<div class="a" style="left:634px;top:58px;width:82px;height:25px;background:#f5f5f5;border:1px solid #e6e6e6;border-radius:5px"></div>
<svg class="a" style="left:642px;top:63px;" width="16" height="16" viewBox="0 0 16 16"><path d="M1.5 1.5L15 8L1.5 14.5Z" fill="#636363"/></svg>
<div class="t" style="left:664px;top:63.5px;font-size:12px;line-height:16px;color:#000;font-weight:normal;transform:scaleX(1.0208);transform-origin:0 50%;-webkit-text-stroke:0.2px #000;">出現再生</div>
<div class="a" style="left:721px;top:58px;width:82px;height:25px;background:#f5f5f5;border:1px solid #e6e6e6;border-radius:5px"></div>
<svg class="a" style="left:727px;top:63px;" width="16" height="16" viewBox="0 0 16 16"><path d="M14.5 1.5L1 8L14.5 14.5Z" fill="#636363"/></svg>
<div class="t" style="left:750px;top:63.5px;font-size:12px;line-height:16px;color:#000;font-weight:normal;transform:scaleX(1.0208);transform-origin:0 50%;-webkit-text-stroke:0.2px #000;">消滅再生</div>
<div class="a" style="left:809px;top:61px;width:1px;height:19px;background:#c4c4c4;"></div>
<div class="a" style="left:814px;top:58px;width:25px;height:25px;background:#f5f5f5;border:1px solid #e6e6e6;border-radius:5px"></div>
<svg class="a" style="left:818px;top:62px;" width="18" height="18" viewBox="0 0 18 18"><path d="M1 16V8A8 8 0 0 1 17 8V16H12V8A3 3 0 0 0 6 8V16Z" fill="#636363"/><rect x="2.5" y="12" width="2" height="3" fill="#f5f5f5"/><rect x="13.5" y="12" width="2" height="3" fill="#f5f5f5"/></svg>
<div class="a" style="left:844px;top:58px;width:25px;height:25px;background:#f5f5f5;border:1px solid #e6e6e6;border-radius:5px"></div>
<svg class="a" style="left:849px;top:64px;" width="14" height="14" viewBox="0 0 14 14"><rect x="0.5" y="0.5" width="13" height="13" fill="#636363"/><rect x="2" y="2" width="2" height="2" fill="#f5f5f5"/><rect x="2" y="6" width="2" height="2" fill="#f5f5f5"/><rect x="2" y="10" width="2" height="2" fill="#f5f5f5"/><rect x="6" y="2" width="2" height="2" fill="#f5f5f5"/><rect x="6" y="6" width="2" height="2" fill="#f5f5f5"/><rect x="6" y="10" width="2" height="2" fill="#f5f5f5"/><rect x="10" y="2" width="2" height="2" fill="#f5f5f5"/><rect x="10" y="6" width="2" height="2" fill="#f5f5f5"/><rect x="10" y="10" width="2" height="2" fill="#f5f5f5"/></svg>
<div class="a" style="left:875px;top:58px;width:25px;height:25px;background:#f5f5f5;border:1px solid #e6e6e6;border-radius:5px"></div>
<svg class="a" style="left:876px;top:59px;" width="24" height="24" viewBox="0 0 24 24"><g transform="rotate(45 15 10)"><rect x="11" y="1" width="8" height="15" rx="1" fill="#636363"/><rect x="12.8" y="4.5" width="4.4" height="2" fill="#f5f5f5"/><rect x="12.8" y="8.5" width="4.4" height="2" fill="#f5f5f5"/><rect x="13" y="16" width="4" height="4" fill="#636363"/></g><circle cx="5.5" cy="19.5" r="3.2" fill="#636363"/></svg>
<div class="a" style="left:905px;top:58px;width:25px;height:25px;background:#f5f5f5;border:1px solid #e6e6e6;border-radius:5px"></div>
<svg class="a" style="left:909px;top:62px;" width="18" height="18" viewBox="0 0 18 18"><path d="M4 1H13Q15 1 15 3V10Q15 12 13 12H6L4 10Z" fill="#636363"/><circle cx="10" cy="6.5" r="2.2" fill="#f5f5f5"/><path d="M5 17L9 13.5L13 17" fill="none" stroke="#636363" stroke-width="2"/><rect x="8" y="11" width="2" height="3" fill="#636363"/></svg>
<div class="a" style="left:935px;top:58px;width:25px;height:25px;background:#f5f5f5;border:1px solid #e6e6e6;border-radius:5px"></div>
<svg class="a" style="left:938px;top:61px;" width="20" height="20" viewBox="0 0 20 20"><rect x="1.5" y="2.5" width="17" height="15" fill="none" stroke="#636363" stroke-width="2.2"/><rect x="5" y="6" width="3" height="2.5" fill="#636363"/><rect x="11" y="6" width="4" height="1.5" fill="#636363"/><rect x="11.5" y="9" width="3" height="5" fill="#636363"/><rect x="5" y="12" width="1.5" height="1.5" fill="#636363"/><rect x="7.5" y="12" width="1.5" height="1.5" fill="#636363"/></svg>
<div class="a" style="left:966px;top:61px;width:1px;height:19px;background:#c4c4c4;"></div>
<div class="t" style="left:972px;top:63.0px;font-size:12px;line-height:16px;color:#b8b8b8;font-weight:normal;transform:scaleX(1.0833);transform-origin:0 50%;-webkit-text-stroke:0.2px #b8b8b8;">調整</div>
<div class="a" style="left:1002px;top:58px;width:25px;height:25px;background:#f5f5f5;border:1px solid #e6e6e6;border-radius:5px"></div>
<svg class="a" style="left:1004px;top:62px;" width="20" height="18" viewBox="0 0 20 18"><path d="M6 17V3M2 7L6 2.5L10 7M14 1V15M10 11L14 15.5L18 11" fill="none" stroke="#636363" stroke-width="2.2"/></svg>
<div class="a" style="left:1032px;top:58px;width:25px;height:25px;background:#f5f5f5;border:1px solid #e6e6e6;border-radius:5px"></div>
<svg class="a" style="left:1034px;top:62px;" width="20" height="18" viewBox="0 0 20 18"><path d="M3 6H17M13 2L17 6L13 10M17 12H3M7 8L3 12L7 16" fill="none" stroke="#636363" stroke-width="2.2"/></svg>
<svg class="a" style="left:1063px;top:60px;" width="24" height="23" viewBox="0 0 24 23"><rect x="1.2" y="1.2" width="21.6" height="20.6" fill="none" stroke="#636363" stroke-width="2.4"/><path d="M5 11.5H19M8.5 8L5 11.5L8.5 15M15.5 8L19 11.5L15.5 15" fill="none" stroke="#636363" stroke-width="2"/></svg>
<svg class="a" style="left:1093px;top:60px;" width="24" height="23" viewBox="0 0 24 23"><rect x="1.2" y="1.2" width="21.6" height="20.6" fill="none" stroke="#636363" stroke-width="2.4"/><path d="M12 4.5V18.5M8.5 8L12 4.5L15.5 8M8.5 15L12 18.5L15.5 15" fill="none" stroke="#636363" stroke-width="2"/></svg>
<div class="a" style="left:1123px;top:61px;width:1px;height:19px;background:#c4c4c4;"></div>
<div class="a" style="left:1128px;top:58px;width:61px;height:25px;background:#f5f5f5;border:1px solid #e6e6e6;border-radius:5px"></div>
<svg class="a" style="left:1132px;top:61px;" width="22" height="20" viewBox="0 0 22 20"><rect x="1" y="8" width="3" height="9" fill="#636363"/><rect x="7" y="2" width="3" height="15" fill="#636363"/><circle cx="15" cy="14.5" r="2.5" fill="#636363"/><rect x="1" y="18" width="20" height="1.6" fill="#636363"/></svg>
<div class="t" style="left:1158px;top:63.0px;font-size:12px;line-height:16px;color:#000;font-weight:normal;transform:scaleX(1.0417);transform-origin:0 50%;-webkit-text-stroke:0.2px #000;">配置</div>
<svg class="a" style="left:1183px;top:77px;" width="8" height="8" viewBox="0 0 8 8"><circle cx="4" cy="4" r="3" fill="#1a78e0"/></svg>
<div class="a" style="left:1195px;top:61px;width:1px;height:19px;background:#c4c4c4;"></div>
<div class="a" style="left:1200px;top:58px;width:25px;height:25px;background:#f5f5f5;border:1px solid #e6e6e6;border-radius:5px"></div>
<svg class="a" style="left:1200px;top:58px;" width="24" height="24" viewBox="0 0 24 24"><path d="M5 21V9.5L6.2 8.2L9 7.3H10.8L11.8 10.6H14" fill="none" stroke="#636363" stroke-width="2"/><path d="M5 21.8L8.5 16L16 12.5L23.2 12L20.8 16.5L15 20L8 21.8Z" fill="#636363"/><rect x="16.2" y="3" width="3.6" height="5.5" fill="#636363"/><path d="M14 8.3H22L18 12.3Z" fill="#636363"/></svg>
<div class="a" style="left:1230px;top:58px;width:25px;height:25px;background:#f5f5f5;border:1px solid #e6e6e6;border-radius:5px"></div>
<svg class="a" style="left:1230px;top:58px;" width="24" height="24" viewBox="0 0 24 24"><path d="M5 21V9.5L6.2 8.2L9 7.3H10.8L11.8 10.6H14" fill="none" stroke="#636363" stroke-width="2"/><path d="M5 21.8L8.5 16L16 12.5L23.2 12L20.8 16.5L15 20L8 21.8Z" fill="#636363"/><rect x="16.2" y="7.5" width="3.6" height="5" fill="#636363"/><path d="M14 8.5L18 4.3L22 8.5Z" fill="#636363"/></svg>
<div class="a" style="left:442px;top:89px;width:1101px;height:947px;background:#4b4b4b;"></div>
<div class="a" style="left:479px;top:272px;width:1027px;height:579px;background:transparent;border:2px solid #fff"></div>
<div class="a" style="left:1547px;top:53px;width:369px;height:983px;background:#acacac;"></div>
<div class="a" style="left:1547px;top:53px;width:369px;height:23px;background:#c08c00;border-left:1px solid #a0a0a0"></div>
<div class="t" style="left:1552px;top:56.5px;font-size:12px;line-height:16px;color:#fff;font-weight:normal;transform:scaleX(1.0546);transform-origin:0 50%;-webkit-text-stroke:0.2px #fff;"><span style="display:inline-block;transform:scaleX(0.77);transform-origin:0 0;margin-right:-13.80px">レイアウト</span>全体の設定</div>
<div class="a" style="left:1547px;top:76px;width:369px;height:1px;background:#a0a0a0;"></div>
<div class="a" style="left:1547px;top:77px;width:369px;height:23px;background:#f8f0d2;border-right:1px solid #a0a0a0;border-bottom:1px solid #a0a0a0;border-left:1px solid #a0a0a0"></div>
<div class="a" style="left:1704px;top:77px;width:1px;height:23px;background:#a0a0a0;"></div>
<div class="t" style="left:1551px;top:82.0px;font-size:12px;line-height:16px;color:#000;font-weight:normal;transform:scaleX(1.0606);transform-origin:0 50%;-webkit-text-stroke:0.2px #000;">BGM</div>
<div class="t" style="left:1708px;top:82.0px;font-size:12px;line-height:16px;color:#000;font-weight:normal;transform:scaleX(0.9163);transform-origin:0 50%;-webkit-text-stroke:0.2px #000;">鳴っているBGMをそのまま再生する</div>
<svg class="a" style="left:1898px;top:81px;" width="14" height="14" viewBox="0 0 14 14"><path d="M1 7H12M7.5 2.5L12 7L7.5 11.5" fill="none" stroke="#909090" stroke-width="1.4"/></svg>
<div class="a" style="left:1547px;top:100px;width:369px;height:23px;background:#f8f0d2;border-right:1px solid #a0a0a0;border-bottom:1px solid #a0a0a0;border-left:1px solid #a0a0a0"></div>
<div class="a" style="left:1704px;top:100px;width:1px;height:23px;background:#a0a0a0;"></div>
<div class="t" style="left:1551px;top:105.0px;font-size:12px;line-height:16px;color:#000;font-weight:normal;transform:scaleX(1.0654);transform-origin:0 50%;-webkit-text-stroke:0.2px #000;">BGS</div>
<div class="t" style="left:1708px;top:105.0px;font-size:12px;line-height:16px;color:#000;font-weight:normal;transform:scaleX(0.9103);transform-origin:0 50%;-webkit-text-stroke:0.2px #000;">鳴っているBGSをそのまま再生する</div>
<svg class="a" style="left:1898px;top:104px;" width="14" height="14" viewBox="0 0 14 14"><path d="M1 7H12M7.5 2.5L12 7L7.5 11.5" fill="none" stroke="#909090" stroke-width="1.4"/></svg>
<div class="a" style="left:1547px;top:123px;width:369px;height:23px;background:#f8f0d2;border-right:1px solid #a0a0a0;border-bottom:1px solid #a0a0a0;border-left:1px solid #a0a0a0"></div>
<div class="a" style="left:1704px;top:123px;width:1px;height:23px;background:#a0a0a0;"></div>
<div class="t" style="left:1551px;top:128.0px;font-size:12px;line-height:16px;color:#000;font-weight:normal;transform:scaleX(1.0454);transform-origin:0 50%;-webkit-text-stroke:0.2px #000;"><span style="display:inline-block;transform:scaleX(0.77);transform-origin:0 0;margin-right:-11.04px">パーティ</span>の特殊書式の表示</div>
<div class="t" style="left:1708px;top:128.0px;font-size:12px;line-height:16px;color:#000;font-weight:normal;transform:scaleX(1.0382);transform-origin:0 50%;-webkit-text-stroke:0.2px #000;"><span style="display:inline-block;transform:scaleX(0.77);transform-origin:0 0;margin-right:-8.28px">ゲーム</span>定義を利用する</div>
<svg class="a" style="left:1898px;top:127px;" width="15" height="15" viewBox="0 0 15 15"><rect x="0.5" y="0.5" width="14" height="13" rx="2" fill="#a0a0a0"/><path d="M2 3L7.5 8L13 3" fill="none" stroke="#fff" stroke-width="1.3"/></svg>
<div class="a" style="left:1547px;top:146px;width:369px;height:23px;background:#f8f0d2;border-right:1px solid #a0a0a0;border-bottom:1px solid #a0a0a0;border-left:1px solid #a0a0a0"></div>
<div class="a" style="left:1704px;top:146px;width:1px;height:23px;background:#a0a0a0;"></div>
<div class="t" style="left:1551px;top:151.0px;font-size:12px;line-height:16px;color:#000;font-weight:normal;transform:scaleX(1.0183);transform-origin:0 50%;-webkit-text-stroke:0.2px #000;">表示する<span style="display:inline-block;transform:scaleX(0.77);transform-origin:0 0;margin-right:-11.04px">キャスト</span>の管理<span style="display:inline-block;transform:scaleX(0.77);transform-origin:0 0;margin-right:-5.52px">タグ</span></div>
<svg class="a" style="left:1898px;top:150px;" width="14" height="14" viewBox="0 0 14 14"><path d="M1 7H12M7.5 2.5L12 7L7.5 11.5" fill="none" stroke="#909090" stroke-width="1.4"/></svg>
<div class="a" style="left:4px;top:1040px;width:1912px;height:36px;background:#6b6b6b;"></div>
<div class="t" style="left:6px;top:1049.0px;font-size:12px;line-height:16px;color:#f0f0f0;font-weight:normal;transform:scaleX(1.0196);transform-origin:0 50%;-webkit-text-stroke:0.2px #f0f0f0;"><span style="display:inline-block;transform:scaleX(0.77);transform-origin:0 0;margin-right:-8.28px">ゲーム</span>中の<span style="display:inline-block;transform:scaleX(0.77);transform-origin:0 0;margin-right:-11.04px">メニュー</span>構成や各種<span style="display:inline-block;transform:scaleX(0.77);transform-origin:0 0;margin-right:-13.80px">ウィンドウ</span>の<span style="display:inline-block;transform:scaleX(0.77);transform-origin:0 0;margin-right:-11.04px">デザイン</span>や表示位置、<span style="display:inline-block;transform:scaleX(0.77);transform-origin:0 0;margin-right:-13.80px">スプライト</span>を使用した<span style="display:inline-block;transform:scaleX(0.77);transform-origin:0 0;margin-right:-22.08px">カーソルデザイン</span>の変更などを<span style="display:inline-block;transform:scaleX(0.77);transform-origin:0 0;margin-right:-16.56px">カスタマイズ</span>することができます。</div>
<div class="a" style="left:1617px;top:1046px;width:92px;height:24px;background:#b4b4b4;border:1px solid #bcbcbc;border-radius:5px;box-shadow:0 0 1px #888"></div>
<svg class="a" style="left:1621px;top:1049px;" width="20" height="20" viewBox="0 0 20 20"><path d="M2 2H11L14 5V9" fill="none" stroke="#555" stroke-width="1.6"/><path d="M2 2V17H9" fill="none" stroke="#555" stroke-width="1.6"/><rect x="5" y="5" width="2" height="2" fill="#555"/><rect x="8" y="5" width="2" height="2" fill="#555"/><rect x="5" y="8" width="2" height="2" fill="#555"/><path d="M10 11L14 10L19 15L15 19L10 14Z" fill="#555"/></svg>
<div class="t" style="left:1647px;top:1050.0px;font-size:12px;line-height:16px;color:#000;font-weight:normal;transform:scaleX(1.0000);transform-origin:0 50%;-webkit-text-stroke:0.2px #000;">適用</div>
<div class="a" style="left:1713px;top:1046px;width:92px;height:24px;background:#b4b4b4;border:1px solid #bcbcbc;border-radius:5px;box-shadow:0 0 1px #888"></div>
<svg class="a" style="left:1717px;top:1049px;" width="18" height="18" viewBox="0 0 18 18"><rect x="0" y="0" width="18" height="18" rx="2" fill="#5b8de0"/><path d="M3.5 9L7.5 13L14.5 5" fill="none" stroke="#fff" stroke-width="2.2"/></svg>
<div class="t" style="left:1743px;top:1049.5px;font-size:13px;line-height:17px;color:#000;font-weight:normal;transform:scaleX(0.9044);transform-origin:0 50%;-webkit-text-stroke:0.2px #000;">OK</div>
<div class="a" style="left:1809px;top:1046px;width:101px;height:24px;background:#b4b4b4;border:1px solid #bcbcbc;border-radius:5px;box-shadow:0 0 1px #888"></div>
<svg class="a" style="left:1813px;top:1049px;" width="18" height="18" viewBox="0 0 18 18"><rect x="0" y="0" width="18" height="18" rx="2" fill="#e05a80"/><path d="M4 4L14 14M14 4L4 14" stroke="#fff" stroke-width="2.2"/></svg>
<div class="t" style="left:1839px;top:1050.0px;font-size:12px;line-height:16px;color:#000;font-weight:normal;transform:scaleX(1.0389);transform-origin:0 50%;-webkit-text-stroke:0.2px #000;"><span style="display:inline-block;transform:scaleX(0.77);transform-origin:0 0;margin-right:-13.80px">キャンセル</span></div>
<div class="a" style="left:520px;top:313px;width:228px;height:194px;background:#181818;border:2px solid #ececec;border-radius:5px;box-shadow:0 0 0 1px rgba(0,0,0,.55)"></div>
<div class="a" style="left:521px;top:350px;width:226px;height:1.2px;background:#e6e6e6;"></div>
<div class="a" style="left:517px;top:311px;width:233px;height:197px;background:transparent;border:1px solid #e00000"></div>
<div class="a" style="left:516px;top:310px;width:4px;height:4px;background:#fff;"></div>
<div class="t" style="left:551px;top:323.0px;font-size:19px;line-height:21px;color:#fff;font-weight:bold;transform:scaleX(1.0000);transform-origin:0 50%;">装備</div>
<svg class="a" style="left:523px;top:362px;" width="22" height="21" viewBox="0 0 22 21"><defs><linearGradient id="ag" x1="0" y1="0" x2="0" y2="1"><stop offset="0" stop-color="#f8f870"/><stop offset="1" stop-color="#a8a820"/></linearGradient></defs><path d="M2 2L20 10.5L2 19L6 10.5Z" fill="url(#ag)" stroke="#c8c830" stroke-width="0.8"/></svg>
<div class="t" style="left:551px;top:362.5px;font-size:19px;line-height:21px;color:#fff;font-weight:bold;transform:scaleX(1.0440);transform-origin:0 50%;">hero</div>
<div class="t" style="left:551px;top:398.0px;font-size:19px;line-height:21px;color:#fff;font-weight:bold;transform:scaleX(0.9858);transform-origin:0 50%;">勇者A</div>
<div class="t" style="left:551px;top:433.0px;font-size:19px;line-height:21px;color:#fff;font-weight:bold;transform:scaleX(0.9665);transform-origin:0 50%;">勇者B</div>
<div class="t" style="left:551px;top:468.0px;font-size:19px;line-height:21px;color:#fff;font-weight:bold;transform:scaleX(1.0038);transform-origin:0 50%;">エルフA</div>
<div class="a" style="left:750px;top:313px;width:306px;height:242px;background:#181818;border:2px solid #ececec;border-radius:5px;box-shadow:0 0 0 1px rgba(0,0,0,.55)"></div>
<div class="a" style="left:751px;top:350px;width:304px;height:1.2px;background:#e6e6e6;"></div>
<div class="t" style="left:759px;top:323.0px;font-size:19px;line-height:21px;color:#fff;font-weight:bold;transform:scaleX(1.0000);transform-origin:0 50%;">装備品</div>
<svg class="a" style="left:755px;top:359px;" width="25" height="25" viewBox="0 0 25 25"><rect x="0" y="0" width="25" height="25" rx="3" fill="#fff"/><path d="M12.5 3L15 7.5L14.2 15H10.8L10 7.5Z" fill="#222"/><path d="M12.5 4.5V14" stroke="#777" stroke-width="0.8"/><rect x="7.5" y="15" width="10" height="1.8" fill="#222"/><rect x="11.3" y="16.5" width="2.4" height="5" fill="#222"/></svg>
<div class="t" style="left:813px;top:359.5px;font-size:19px;line-height:21px;color:#fff;font-weight:normal;transform:scaleX(0.9474);transform-origin:0 50%;-webkit-text-stroke:0.6px #fff">なし</div>
<svg class="a" style="left:755px;top:391px;" width="25" height="25" viewBox="0 0 25 25"><rect x="0" y="0" width="25" height="25" rx="3" fill="#fff"/><path d="M12.5 3.5L20.5 6.5Q20.5 16 12.5 21.5Q4.5 16 4.5 6.5Z" fill="#222"/><path d="M12.5 5.5L18.5 7.8Q18.5 15 12.5 19.3Q6.5 15 6.5 7.8Z" fill="#fff"/><path d="M12.5 7L17 8.8Q17 14.5 12.5 17.8Q8 14.5 8 8.8Z" fill="#444"/><path d="M12.5 6.5V18.5" stroke="#fff" stroke-width="1.2"/></svg>
<div class="t" style="left:813px;top:391.5px;font-size:19px;line-height:21px;color:#fff;font-weight:normal;transform:scaleX(0.9474);transform-origin:0 50%;-webkit-text-stroke:0.6px #fff">なし</div>
<svg class="a" style="left:755px;top:423px;" width="25" height="25" viewBox="0 0 25 25"><rect x="0" y="0" width="25" height="25" rx="3" fill="#fff"/><path d="M7 20V12Q7 5 12.5 5Q18 5 18 12V20Z" fill="#1e1e1e"/><path d="M8.5 10.5H16.5V13H13.7V20H11.3V13H8.5Z" fill="#fff"/><path d="M2.5 5.5Q3.5 10.5 7.5 11L8 8.5Q4.5 8 2.5 5.5Z" fill="#1e1e1e"/><path d="M22.5 5.5Q21.5 10.5 17.5 11L17 8.5Q20.5 8 22.5 5.5Z" fill="#1e1e1e"/></svg>
<div class="t" style="left:813px;top:423.5px;font-size:19px;line-height:21px;color:#fff;font-weight:normal;transform:scaleX(0.9474);transform-origin:0 50%;-webkit-text-stroke:0.6px #fff">なし</div>
<svg class="a" style="left:755px;top:455px;" width="25" height="25" viewBox="0 0 25 25"><rect x="0" y="0" width="25" height="25" rx="3" fill="#fff"/><path d="M8 5.5L11 7.5H14L17 5.5L18 15L12.5 17L7 15Z" fill="#1e1e1e"/><path d="M3 5L8.5 6.5L8 10Z" fill="#1e1e1e"/><path d="M22 5L16.5 6.5L17 10Z" fill="#1e1e1e"/><path d="M4 21L9.5 16.5M21 21L15.5 16.5" stroke="#1e1e1e" stroke-width="2.2"/><circle cx="12.5" cy="19" r="2.4" fill="#1e1e1e"/><path d="M9 12H16" stroke="#666" stroke-width="0.8"/></svg>
<div class="t" style="left:813px;top:455.5px;font-size:19px;line-height:21px;color:#fff;font-weight:normal;transform:scaleX(0.9474);transform-origin:0 50%;-webkit-text-stroke:0.6px #fff">なし</div>
<svg class="a" style="left:755px;top:487px;" width="25" height="25" viewBox="0 0 25 25"><rect x="0" y="0" width="25" height="25" rx="3" fill="#fff"/><path d="M3 4Q12.5 16 22 4" fill="none" stroke="#333" stroke-width="1.2" stroke-dasharray="1.1 1.3"/><circle cx="12.5" cy="17.5" r="3" fill="none" stroke="#333" stroke-width="1.1"/><circle cx="12.5" cy="17.5" r="1.6" fill="#444"/></svg>
<div class="t" style="left:813px;top:487.5px;font-size:19px;line-height:21px;color:#fff;font-weight:normal;transform:scaleX(0.9474);transform-origin:0 50%;-webkit-text-stroke:0.6px #fff">なし</div>
<svg class="a" style="left:755px;top:519px;" width="25" height="25" viewBox="0 0 25 25"><rect x="0" y="0" width="25" height="25" rx="3" fill="#fff"/><path d="M3 4Q12.5 16 22 4" fill="none" stroke="#333" stroke-width="1.2" stroke-dasharray="1.1 1.3"/><circle cx="12.5" cy="17.5" r="3" fill="none" stroke="#333" stroke-width="1.1"/><circle cx="12.5" cy="17.5" r="1.6" fill="#444"/></svg>
<div class="t" style="left:813px;top:519.5px;font-size:19px;line-height:21px;color:#fff;font-weight:normal;transform:scaleX(0.9474);transform-origin:0 50%;-webkit-text-stroke:0.6px #fff">なし</div>
<div class="a" style="left:1057px;top:313px;width:229px;height:242px;background:#181818;border:2px solid #ececec;border-radius:5px;box-shadow:0 0 0 1px rgba(0,0,0,.55)"></div>
<div class="t" style="left:1068px;top:326.5px;font-size:19px;line-height:21px;color:#fff;font-weight:bold;transform:scaleX(0.9825);transform-origin:0 50%;">攻撃力</div>
<div class="t" style="left:1176px;top:327.5px;width:100px;text-align:right;font-size:20px;line-height:22px;color:#fff;font-weight:bold;font-family:'Liberation Mono',monospace">20</div>
<div class="t" style="left:1068px;top:358.5px;font-size:19px;line-height:21px;color:#fff;font-weight:bold;transform:scaleX(1.0000);transform-origin:0 50%;">属性攻撃力</div>
<div class="t" style="left:1176px;top:359.5px;width:100px;text-align:right;font-size:20px;line-height:22px;color:#fff;font-weight:bold;font-family:'Liberation Mono',monospace">20</div>
<div class="t" style="left:1068px;top:390.5px;font-size:19px;line-height:21px;color:#fff;font-weight:bold;transform:scaleX(0.9737);transform-origin:0 50%;">魔力</div>
<div class="t" style="left:1176px;top:391.5px;width:100px;text-align:right;font-size:20px;line-height:22px;color:#fff;font-weight:bold;font-family:'Liberation Mono',monospace">10</div>
<div class="t" style="left:1068px;top:422.5px;font-size:19px;line-height:21px;color:#fff;font-weight:bold;transform:scaleX(0.9825);transform-origin:0 50%;">防御力</div>
<div class="t" style="left:1176px;top:423.5px;width:100px;text-align:right;font-size:20px;line-height:22px;color:#fff;font-weight:bold;font-family:'Liberation Mono',monospace">20</div>
<div class="t" style="left:1068px;top:454.5px;font-size:19px;line-height:21px;color:#fff;font-weight:bold;transform:scaleX(0.9825);transform-origin:0 50%;">素早さ</div>
<div class="t" style="left:1176px;top:455.5px;width:100px;text-align:right;font-size:20px;line-height:22px;color:#fff;font-weight:bold;font-family:'Liberation Mono',monospace">10</div>
<div class="t" style="left:1068px;top:486.5px;font-size:19px;line-height:21px;color:#fff;font-weight:bold;transform:scaleX(1.0000);transform-origin:0 50%;">命中率</div>
<div class="t" style="left:1176px;top:487.5px;width:100px;text-align:right;font-size:20px;line-height:22px;color:#fff;font-weight:bold;font-family:'Liberation Mono',monospace">100</div>
<div class="t" style="left:1068px;top:518.5px;font-size:19px;line-height:21px;color:#fff;font-weight:bold;transform:scaleX(1.0000);transform-origin:0 50%;">回避率</div>
<div class="t" style="left:1176px;top:519.5px;width:100px;text-align:right;font-size:20px;line-height:22px;color:#fff;font-weight:bold;font-family:'Liberation Mono',monospace">100</div>
<div class="t" style="left:582px;top:757.5px;font-size:20px;line-height:20px;color:#fff;font-weight:normal;transform:scaleX(1.0559);transform-origin:0 50%;text-shadow:1px 1px 0 #222,-1px -1px 0 #222,1px -1px 0 #222,-1px 1px 0 #222;-webkit-text-stroke:0.6px #fff">PartyImageIconX</div>
<svg class="a" style="left:572px;top:744px;" width="78" height="19" viewBox="0 0 78 19"><defs><linearGradient id="rg" x1="1" y1="0" x2="0" y2="1"><stop offset="0" stop-color="#48e0f8"/><stop offset="1" stop-color="#1868e8"/></linearGradient><linearGradient id="og" x1="0" y1="0" x2="0" y2="1"><stop offset="0" stop-color="#ffe080"/><stop offset="1" stop-color="#f09010"/></linearGradient></defs><g fill="none" stroke="url(#rg)" stroke-linecap="round" stroke-width="3"><path d="M6 5L11 4L14 7L18 9"/><path d="M13 5L9 11L3 13"/><path d="M9 11L12 13L11 17"/></g><circle cx="13.5" cy="3" r="2.4" fill="#40d8f8"/><path d="M22 17L35 5V17Z" fill="url(#og)"/><path d="M31 5L35 0L39 5Z" fill="#f8d040"/><rect x="34" y="4" width="2" height="8" fill="#f8d040"/><path d="M22 7V12H28M27 6.5V15" fill="none" stroke="#f0e070" stroke-width="2.8"/><path d="M42 18Q41 11 43 6Q46 1 49.5 1.5Q53 1 55.5 6Q57 11 56 18Q52 16.5 49 18Q46 16.5 42 18Z" fill="#7a30a8"/><circle cx="41.5" cy="11.5" r="2" fill="#7a30a8"/><circle cx="57" cy="11.5" r="2" fill="#7a30a8"/><ellipse cx="47" cy="7" rx="1" ry="1.5" fill="#2a0838"/><ellipse cx="52" cy="7" rx="1" ry="1.5" fill="#2a0838"/><path d="M47.5 11.5Q49.5 13 51.5 11.5" stroke="#2a0838" stroke-width="1" fill="none"/><circle cx="68" cy="5.5" r="4" fill="#a078f0"/><circle cx="67" cy="4.3" r="1.3" fill="#e0d0ff"/><circle cx="62.5" cy="10" r="2.6" fill="#9a70e8"/><circle cx="71.5" cy="13" r="3.3" fill="#a078f0"/><circle cx="71" cy="12" r="1" fill="#e0d0ff"/><path d="M61 17L64 14.5L65 17L68 15L67 18Z" fill="#8e62e0"/></svg>
<div class="a" style="left:671px;top:805px;width:107px;height:6px;background:#f8c020;border:1px solid #2a2a2a;border-radius:3px"></div>
<div class="a" style="left:671px;top:831px;width:107px;height:6px;background:#2840e8;border:1px solid #2a2a2a;border-radius:3px"></div>
<div class="t" style="left:670px;top:767.0px;font-size:11px;line-height:13px;color:#fff;font-weight:normal;transform:scaleX(1.1801);transform-origin:0 50%;text-shadow:1px 1px 0 #222,-1px -1px 0 #222,1px -1px 0 #222,-1px 1px 0 #222;-webkit-text-stroke:0.3px #fff">hero</div>
<div class="t" style="left:669px;top:789.5px;font-size:14px;line-height:15px;color:#fff;font-weight:normal;text-shadow:1px 1px 0 #222,-1px -1px 0 #222,1px -1px 0 #222,-1px 1px 0 #222;-webkit-text-stroke:0.5px #fff">HP</div>
<div class="t" style="left:670px;top:816.5px;font-size:14px;line-height:15px;color:#fff;font-weight:normal;text-shadow:1px 1px 0 #222,-1px -1px 0 #222,1px -1px 0 #222,-1px 1px 0 #222;-webkit-text-stroke:0.5px #fff">MP</div>
<div class="t" style="left:719px;top:788.5px;width:60px;text-align:right;font-size:16px;line-height:16px;color:#fff;font-weight:bold;font-family:'Liberation Mono',monospace;text-shadow:1px 1px 0 #222,-1px -1px 0 #222,1px -1px 0 #222,-1px 1px 0 #222">29/30</div>
<div class="t" style="left:719px;top:815.5px;width:60px;text-align:right;font-size:16px;line-height:16px;color:#fff;font-weight:bold;font-family:'Liberation Mono',monospace;text-shadow:1px 1px 0 #222,-1px -1px 0 #222,1px -1px 0 #222,-1px 1px 0 #222">9/10</div>
<div class="t" style="left:635px;top:822.5px;font-size:14px;line-height:15px;color:#fff;font-weight:normal;text-shadow:1px 1px 0 #222,-1px -1px 0 #222,1px -1px 0 #222,-1px 1px 0 #222;-webkit-text-stroke:0.5px #fff">Lv.1</div>
<svg class="a" style="left:784px;top:744px;" width="78" height="19" viewBox="0 0 78 19"><defs><linearGradient id="rg" x1="1" y1="0" x2="0" y2="1"><stop offset="0" stop-color="#48e0f8"/><stop offset="1" stop-color="#1868e8"/></linearGradient><linearGradient id="og" x1="0" y1="0" x2="0" y2="1"><stop offset="0" stop-color="#ffe080"/><stop offset="1" stop-color="#f09010"/></linearGradient></defs><g fill="none" stroke="url(#rg)" stroke-linecap="round" stroke-width="3"><path d="M6 5L11 4L14 7L18 9"/><path d="M13 5L9 11L3 13"/><path d="M9 11L12 13L11 17"/></g><circle cx="13.5" cy="3" r="2.4" fill="#40d8f8"/><path d="M22 17L35 5V17Z" fill="url(#og)"/><path d="M31 5L35 0L39 5Z" fill="#f8d040"/><rect x="34" y="4" width="2" height="8" fill="#f8d040"/><path d="M22 7V12H28M27 6.5V15" fill="none" stroke="#f0e070" stroke-width="2.8"/><path d="M42 18Q41 11 43 6Q46 1 49.5 1.5Q53 1 55.5 6Q57 11 56 18Q52 16.5 49 18Q46 16.5 42 18Z" fill="#7a30a8"/><circle cx="41.5" cy="11.5" r="2" fill="#7a30a8"/><circle cx="57" cy="11.5" r="2" fill="#7a30a8"/><ellipse cx="47" cy="7" rx="1" ry="1.5" fill="#2a0838"/><ellipse cx="52" cy="7" rx="1" ry="1.5" fill="#2a0838"/><path d="M47.5 11.5Q49.5 13 51.5 11.5" stroke="#2a0838" stroke-width="1" fill="none"/><circle cx="68" cy="5.5" r="4" fill="#a078f0"/><circle cx="67" cy="4.3" r="1.3" fill="#e0d0ff"/><circle cx="62.5" cy="10" r="2.6" fill="#9a70e8"/><circle cx="71.5" cy="13" r="3.3" fill="#a078f0"/><circle cx="71" cy="12" r="1" fill="#e0d0ff"/><path d="M61 17L64 14.5L65 17L68 15L67 18Z" fill="#8e62e0"/></svg>
<svg class="a" style="left:792px;top:754px;" width="92" height="84" viewBox="-6 -4 92 84"><path d="M4 80Q8 68 22 62L30 60L40 64L50 60Q60 62 64 70L66 80Z" fill="#34507e"/><path d="M22 80L28 62L36 68L34 80M42 80L44 66L52 60L50 80" fill="none" stroke="#c8b060" stroke-width="2.2"/><path d="M54 80Q56 66 64 62Q76 62 80 80Z" fill="#9ea6b0"/><path d="M27 50L42 50L41 64L28 64Z" fill="#f0cca8"/><path d="M18 30Q17 52 26 58Q32 63 38 62Q48 58 50 42L52 30Z" fill="#fbe4c4"/><ellipse cx="26" cy="41" rx="2.6" ry="2" fill="#5a4020"/><ellipse cx="43" cy="41" rx="2.6" ry="2" fill="#5a4020"/><path d="M32 53H38" stroke="#c08070" stroke-width="1"/><path d="M8 40L12 26L8 22L18 16L22 8L28 12L40 3L42 10L54 8L50 14L62 20L54 22L60 32L52 30L54 44L48 38L44 28L36 32L30 26L24 36L20 50L14 42L10 48Z" fill="#d63c2c"/><path d="M20 16L40 6L52 14L36 16Z" fill="#ee5a42"/></svg>
<div class="a" style="left:883px;top:805px;width:107px;height:6px;background:#f8c020;border:1px solid #2a2a2a;border-radius:3px"></div>
<div class="a" style="left:883px;top:831px;width:107px;height:6px;background:#2840e8;border:1px solid #2a2a2a;border-radius:3px"></div>
<div class="t" style="left:882px;top:767.0px;font-size:11px;line-height:13px;color:#fff;font-weight:normal;transform:scaleX(1.0564);transform-origin:0 50%;text-shadow:1px 1px 0 #222,-1px -1px 0 #222,1px -1px 0 #222,-1px 1px 0 #222;-webkit-text-stroke:0.3px #fff">勇者A</div>
<div class="t" style="left:881px;top:789.5px;font-size:14px;line-height:15px;color:#fff;font-weight:normal;text-shadow:1px 1px 0 #222,-1px -1px 0 #222,1px -1px 0 #222,-1px 1px 0 #222;-webkit-text-stroke:0.5px #fff">HP</div>
<div class="t" style="left:882px;top:816.5px;font-size:14px;line-height:15px;color:#fff;font-weight:normal;text-shadow:1px 1px 0 #222,-1px -1px 0 #222,1px -1px 0 #222,-1px 1px 0 #222;-webkit-text-stroke:0.5px #fff">MP</div>
<div class="t" style="left:931px;top:788.5px;width:60px;text-align:right;font-size:16px;line-height:16px;color:#fff;font-weight:bold;font-family:'Liberation Mono',monospace;text-shadow:1px 1px 0 #222,-1px -1px 0 #222,1px -1px 0 #222,-1px 1px 0 #222">79/80</div>
<div class="t" style="left:931px;top:815.5px;width:60px;text-align:right;font-size:16px;line-height:16px;color:#fff;font-weight:bold;font-family:'Liberation Mono',monospace;text-shadow:1px 1px 0 #222,-1px -1px 0 #222,1px -1px 0 #222,-1px 1px 0 #222">19/20</div>
<div class="t" style="left:847px;top:822.5px;font-size:14px;line-height:15px;color:#fff;font-weight:normal;text-shadow:1px 1px 0 #222,-1px -1px 0 #222,1px -1px 0 #222,-1px 1px 0 #222;-webkit-text-stroke:0.5px #fff">Lv.1</div>
<svg class="a" style="left:995px;top:744px;" width="78" height="19" viewBox="0 0 78 19"><defs><linearGradient id="rg" x1="1" y1="0" x2="0" y2="1"><stop offset="0" stop-color="#48e0f8"/><stop offset="1" stop-color="#1868e8"/></linearGradient><linearGradient id="og" x1="0" y1="0" x2="0" y2="1"><stop offset="0" stop-color="#ffe080"/><stop offset="1" stop-color="#f09010"/></linearGradient></defs><g fill="none" stroke="url(#rg)" stroke-linecap="round" stroke-width="3"><path d="M6 5L11 4L14 7L18 9"/><path d="M13 5L9 11L3 13"/><path d="M9 11L12 13L11 17"/></g><circle cx="13.5" cy="3" r="2.4" fill="#40d8f8"/><path d="M22 17L35 5V17Z" fill="url(#og)"/><path d="M31 5L35 0L39 5Z" fill="#f8d040"/><rect x="34" y="4" width="2" height="8" fill="#f8d040"/><path d="M22 7V12H28M27 6.5V15" fill="none" stroke="#f0e070" stroke-width="2.8"/><path d="M42 18Q41 11 43 6Q46 1 49.5 1.5Q53 1 55.5 6Q57 11 56 18Q52 16.5 49 18Q46 16.5 42 18Z" fill="#7a30a8"/><circle cx="41.5" cy="11.5" r="2" fill="#7a30a8"/><circle cx="57" cy="11.5" r="2" fill="#7a30a8"/><ellipse cx="47" cy="7" rx="1" ry="1.5" fill="#2a0838"/><ellipse cx="52" cy="7" rx="1" ry="1.5" fill="#2a0838"/><path d="M47.5 11.5Q49.5 13 51.5 11.5" stroke="#2a0838" stroke-width="1" fill="none"/><circle cx="68" cy="5.5" r="4" fill="#a078f0"/><circle cx="67" cy="4.3" r="1.3" fill="#e0d0ff"/><circle cx="62.5" cy="10" r="2.6" fill="#9a70e8"/><circle cx="71.5" cy="13" r="3.3" fill="#a078f0"/><circle cx="71" cy="12" r="1" fill="#e0d0ff"/><path d="M61 17L64 14.5L65 17L68 15L67 18Z" fill="#8e62e0"/></svg>
<svg class="a" style="left:1003px;top:754px;" width="92" height="84" viewBox="-6 -4 92 84"><path d="M2 80Q6 66 20 61L36 63L52 61Q66 64 72 80Z" fill="#c0a078"/><path d="M16 80L22 63L36 70L48 63L56 80Z" fill="#c82e34"/><path d="M28 80L32 70H42L46 80Z" fill="#f4f0f0"/><circle cx="30" cy="70" r="2.6" fill="#d8c080"/><circle cx="41" cy="70" r="2.6" fill="#d8c080"/><path d="M30 50H40V63H30Z" fill="#f4d8c0"/><path d="M19 26Q18 46 26 54Q32 58 38 55Q46 48 46 28Z" fill="#fcecd8"/><ellipse cx="24" cy="33" rx="2.4" ry="1.8" fill="#40a040"/><ellipse cx="39" cy="32" rx="2.4" ry="1.8" fill="#40a040"/><path d="M40 2Q58 4 64 26Q70 52 76 80L68 80Q62 56 56 34Q52 18 46 10Z" fill="#eea468"/><path d="M10 40Q8 20 18 10Q28 2 40 4Q52 8 52 24L48 32Q44 18 38 14Q30 20 22 24Q18 36 18 52L12 56Z" fill="#eea468"/><path d="M46 16Q52 26 50 44L54 48Q56 28 50 16Z" fill="#e08c58"/></svg>
<div class="a" style="left:1094px;top:805px;width:107px;height:6px;background:#f8c020;border:1px solid #2a2a2a;border-radius:3px"></div>
<div class="a" style="left:1094px;top:831px;width:107px;height:6px;background:#2840e8;border:1px solid #2a2a2a;border-radius:3px"></div>
<div class="t" style="left:1093px;top:767.0px;font-size:11px;line-height:13px;color:#fff;font-weight:normal;transform:scaleX(1.0564);transform-origin:0 50%;text-shadow:1px 1px 0 #222,-1px -1px 0 #222,1px -1px 0 #222,-1px 1px 0 #222;-webkit-text-stroke:0.3px #fff">勇者B</div>
<div class="t" style="left:1092px;top:789.5px;font-size:14px;line-height:15px;color:#fff;font-weight:normal;text-shadow:1px 1px 0 #222,-1px -1px 0 #222,1px -1px 0 #222,-1px 1px 0 #222;-webkit-text-stroke:0.5px #fff">HP</div>
<div class="t" style="left:1093px;top:816.5px;font-size:14px;line-height:15px;color:#fff;font-weight:normal;text-shadow:1px 1px 0 #222,-1px -1px 0 #222,1px -1px 0 #222,-1px 1px 0 #222;-webkit-text-stroke:0.5px #fff">MP</div>
<div class="t" style="left:1142px;top:788.5px;width:60px;text-align:right;font-size:16px;line-height:16px;color:#fff;font-weight:bold;font-family:'Liberation Mono',monospace;text-shadow:1px 1px 0 #222,-1px -1px 0 #222,1px -1px 0 #222,-1px 1px 0 #222">59/60</div>
<div class="t" style="left:1142px;top:815.5px;width:60px;text-align:right;font-size:16px;line-height:16px;color:#fff;font-weight:bold;font-family:'Liberation Mono',monospace;text-shadow:1px 1px 0 #222,-1px -1px 0 #222,1px -1px 0 #222,-1px 1px 0 #222">29/30</div>
<div class="t" style="left:1058px;top:822.5px;font-size:14px;line-height:15px;color:#fff;font-weight:normal;text-shadow:1px 1px 0 #222,-1px -1px 0 #222,1px -1px 0 #222,-1px 1px 0 #222;-webkit-text-stroke:0.5px #fff">Lv.3</div>
<svg class="a" style="left:1206px;top:744px;" width="78" height="19" viewBox="0 0 78 19"><defs><linearGradient id="rg" x1="1" y1="0" x2="0" y2="1"><stop offset="0" stop-color="#48e0f8"/><stop offset="1" stop-color="#1868e8"/></linearGradient><linearGradient id="og" x1="0" y1="0" x2="0" y2="1"><stop offset="0" stop-color="#ffe080"/><stop offset="1" stop-color="#f09010"/></linearGradient></defs><g fill="none" stroke="url(#rg)" stroke-linecap="round" stroke-width="3"><path d="M6 5L11 4L14 7L18 9"/><path d="M13 5L9 11L3 13"/><path d="M9 11L12 13L11 17"/></g><circle cx="13.5" cy="3" r="2.4" fill="#40d8f8"/><path d="M22 17L35 5V17Z" fill="url(#og)"/><path d="M31 5L35 0L39 5Z" fill="#f8d040"/><rect x="34" y="4" width="2" height="8" fill="#f8d040"/><path d="M22 7V12H28M27 6.5V15" fill="none" stroke="#f0e070" stroke-width="2.8"/><path d="M42 18Q41 11 43 6Q46 1 49.5 1.5Q53 1 55.5 6Q57 11 56 18Q52 16.5 49 18Q46 16.5 42 18Z" fill="#7a30a8"/><circle cx="41.5" cy="11.5" r="2" fill="#7a30a8"/><circle cx="57" cy="11.5" r="2" fill="#7a30a8"/><ellipse cx="47" cy="7" rx="1" ry="1.5" fill="#2a0838"/><ellipse cx="52" cy="7" rx="1" ry="1.5" fill="#2a0838"/><path d="M47.5 11.5Q49.5 13 51.5 11.5" stroke="#2a0838" stroke-width="1" fill="none"/><circle cx="68" cy="5.5" r="4" fill="#a078f0"/><circle cx="67" cy="4.3" r="1.3" fill="#e0d0ff"/><circle cx="62.5" cy="10" r="2.6" fill="#9a70e8"/><circle cx="71.5" cy="13" r="3.3" fill="#a078f0"/><circle cx="71" cy="12" r="1" fill="#e0d0ff"/><path d="M61 17L64 14.5L65 17L68 15L67 18Z" fill="#8e62e0"/></svg>
<svg class="a" style="left:1214px;top:754px;" width="92" height="84" viewBox="-6 -4 92 84"><path d="M-6 80Q-2 64 16 58L36 60L56 58Q74 62 78 80Z" fill="#3a4a2c"/><path d="M-6 80Q-4 66 10 62L14 80Z" fill="#7a8490"/><path d="M30 60L38 80L46 60L40 56L36 56Z" fill="#b4bca4"/><path d="M10 62L26 80" stroke="#5a3a20" stroke-width="3"/><path d="M6 20L24 32L22 38Z" fill="#f0d4bc"/><path d="M68 20L50 32L52 38Z" fill="#f0d4bc"/><path d="M28 50L46 50L44 60L30 60Z" fill="#f4d8bc"/><path d="M23 20Q22 44 30 50Q36 54 42 50Q48 44 48 20Z" fill="#fcecd8"/><ellipse cx="29" cy="29" rx="2.4" ry="1.5" fill="#806040"/><ellipse cx="41" cy="29" rx="2.4" ry="1.5" fill="#806040"/><path d="M16 80Q14 40 18 16Q26 -2 38 0Q52 -2 58 16Q62 40 62 80H54Q54 40 50 22Q44 14 36 14Q26 16 24 22Q22 40 24 80Z" fill="#eab454"/><path d="M24 22Q36 12 50 22L48 14Q36 8 26 14Z" fill="#d89a38"/></svg>
<div class="a" style="left:1305px;top:805px;width:107px;height:6px;background:#f8c020;border:1px solid #2a2a2a;border-radius:3px"></div>
<div class="a" style="left:1305px;top:831px;width:107px;height:6px;background:#2840e8;border:1px solid #2a2a2a;border-radius:3px"></div>
<div class="t" style="left:1304px;top:767.0px;font-size:11px;line-height:13px;color:#fff;font-weight:normal;transform:scaleX(1.2148);transform-origin:0 50%;text-shadow:1px 1px 0 #222,-1px -1px 0 #222,1px -1px 0 #222,-1px 1px 0 #222;-webkit-text-stroke:0.3px #fff"><span style="display:inline-block;transform:scaleX(0.8);transform-origin:0 0;margin-right:-6.60px">エルフ</span>A</div>
<div class="t" style="left:1303px;top:789.5px;font-size:14px;line-height:15px;color:#fff;font-weight:normal;text-shadow:1px 1px 0 #222,-1px -1px 0 #222,1px -1px 0 #222,-1px 1px 0 #222;-webkit-text-stroke:0.5px #fff">HP</div>
<div class="t" style="left:1304px;top:816.5px;font-size:14px;line-height:15px;color:#fff;font-weight:normal;text-shadow:1px 1px 0 #222,-1px -1px 0 #222,1px -1px 0 #222,-1px 1px 0 #222;-webkit-text-stroke:0.5px #fff">MP</div>
<div class="t" style="left:1353px;top:788.5px;width:60px;text-align:right;font-size:16px;line-height:16px;color:#fff;font-weight:bold;font-family:'Liberation Mono',monospace;text-shadow:1px 1px 0 #222,-1px -1px 0 #222,1px -1px 0 #222,-1px 1px 0 #222">29/30</div>
<div class="t" style="left:1353px;top:815.5px;width:60px;text-align:right;font-size:16px;line-height:16px;color:#fff;font-weight:bold;font-family:'Liberation Mono',monospace;text-shadow:1px 1px 0 #222,-1px -1px 0 #222,1px -1px 0 #222,-1px 1px 0 #222">9/10</div>
<div class="t" style="left:1269px;top:822.5px;font-size:14px;line-height:15px;color:#fff;font-weight:normal;text-shadow:1px 1px 0 #222,-1px -1px 0 #222,1px -1px 0 #222,-1px 1px 0 #222;-webkit-text-stroke:0.5px #fff">Lv.1</div>
</body></html>
